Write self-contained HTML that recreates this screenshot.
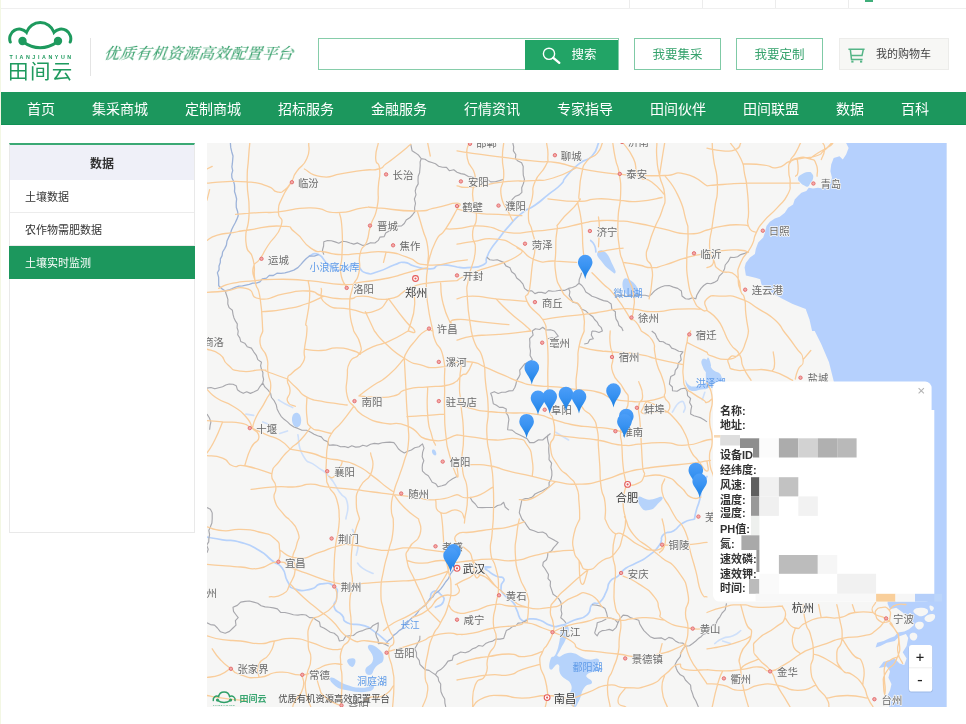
<!DOCTYPE html>
<html lang="zh-CN">
<head>
<meta charset="utf-8">
<title>田间云 - 土壤实时监测</title>
<style>
*{box-sizing:border-box;margin:0;padding:0}
html,body{width:966px;height:724px;overflow:hidden;background:#fff}
body{position:relative;font-family:"Liberation Sans","Noto Sans CJK SC",sans-serif;color:#333}
.abs{position:absolute}
#logo,#slogan,#nav,#side,.obtn,#cart,#sbtn,#search{filter:blur(0.3px)}
#lstrip{left:0;top:0;width:1px;height:724px;background:#f3f7e4}
#topline{left:1px;top:8px;width:965px;height:1px;background:#efefef}
.tv{top:0;width:1px;height:8px;background:#ececec}
#tgreen{left:865px;top:0;width:8px;height:2px;background:#3fae7a}
#logo{left:8px;top:19px;width:66px;height:64px}
#ldiv{left:90px;top:38px;width:1px;height:38px;background:#e4e4e4}
#slogan{left:104px;top:42px;width:200px;height:24px;line-height:24px;font-family:"Liberation Serif","Noto Serif CJK SC",serif;font-style:italic;font-weight:500;font-size:15.5px;letter-spacing:0.3px;color:#37a06c;white-space:nowrap;transform:skewX(-8deg);transform-origin:0 50%}
#search{left:318px;top:38px;width:301px;height:32px;border:1.5px solid #86cdaa;background:#fff}
#sbtn{left:525px;top:39.5px;width:92.5px;height:30px;background:#22a466;color:#fff;font-size:12.5px;line-height:30px}
#sbtn span{position:absolute;left:46.5px;top:0.5px}
#sbtn svg{position:absolute;left:16px;top:5px}
.obtn{top:38px;height:32px;border:1.5px solid #7fcaa6;background:#fff;color:#35a26c;font-size:12.5px;line-height:32px;text-align:center;padding-left:0}
#cart{left:839px;top:38px;width:110px;height:32px;border:1px solid #ececea;background:#f7f7f5;color:#444;font-size:11px;line-height:30px}
#cart span{position:absolute;left:36px;top:0;white-space:nowrap}
#cart svg{position:absolute;left:8px;top:9px}
#nav{left:1px;top:92px;width:965px;height:33px;background:#1c975d;border-bottom:1px solid #109155;color:#fff;font-size:14px;line-height:34px;white-space:nowrap}
#nav a{position:absolute;top:0;height:33px;text-align:center;color:#fff;text-decoration:none}
#side{left:9px;top:143px;width:186px;height:390px;border:1px solid #e9e9e9;border-top:2.5px solid #3aa974;background:#fff}
#side .hd{height:35px;line-height:38px;background:#eff0f8;text-align:center;font-size:12px;font-weight:700;color:#333}
#side .it{height:33px;line-height:34.5px;padding-left:15px;font-size:11px;color:#333;border-bottom:1px solid #ececec;white-space:nowrap}
#side .it.on{background:#1c975d;color:#fff;border-bottom:none;margin:0 -1px;padding-left:16px}
#map{left:207px;top:143px;width:740px;height:564px;overflow:hidden;background:#f6f6f5}
#map svg{position:absolute;left:0;top:0;filter:blur(0.4px)}
</style>
</head>
<body>
<div id="lstrip" class="abs"></div>
<div id="topline" class="abs"></div>
<div class="abs tv" style="left:629px"></div><div class="abs tv" style="left:702px"></div><div class="abs tv" style="left:775px"></div><div class="abs tv" style="left:848px"></div>
<div id="tgreen" class="abs"></div>

<svg id="logo" class="abs" viewBox="8 19 66 64">
<g fill="none" stroke="#1e9a5e" stroke-width="3" stroke-linecap="round">
<path d="M10.3 42 A9.6 9.6 0 0 1 26.5 32.3 A14.6 14.6 0 0 1 54 32.3 A9.6 9.6 0 0 1 70.2 42"/>
<path d="M22.5 41.5 Q40 54 58 41.5"/>
</g>
<circle cx="22.5" cy="41" r="4.2" fill="#1e9a5e"/><circle cx="58" cy="41" r="4.2" fill="#1e9a5e"/>
<text x="41.7" y="58.7" text-anchor="middle" font-family="Liberation Sans,sans-serif" font-weight="700" font-size="5.3" letter-spacing="2.6" fill="#1e9a5e">TIANJIANYUN</text>
<text x="40.9" y="79.3" text-anchor="middle" font-family="Liberation Sans,Noto Sans CJK SC,sans-serif" font-weight="400" font-size="20.5" letter-spacing="1.4" fill="#1e9a5e">田间云</text>
</svg>
<div id="ldiv" class="abs"></div>
<div id="slogan" class="abs">优质有机资源高效配置平台</div>

<div id="search" class="abs"></div>
<div id="sbtn" class="abs"><svg width="24" height="22" viewBox="0 0 24 22"><circle cx="8" cy="8.8" r="5.6" fill="none" stroke="#fff" stroke-width="1.4"/><path d="M12.3 12.8 L18.3 17.8" stroke="#fff" stroke-width="2.4" stroke-linecap="round"/></svg><span>搜索</span></div>
<div class="abs obtn" style="left:634px;width:87px">我要集采</div>
<div class="abs obtn" style="left:736px;width:87px">我要定制</div>
<div id="cart" class="abs"><svg width="18" height="16" viewBox="0 0 18 16"><path d="M0.4 1.2 H16.6 M2.3 1.2 L3.5 11.4 H14.6 M15.4 1.2 L14 7.6 H3.2" fill="none" stroke="#55b587" stroke-width="1.5"/><rect x="3.3" y="12.6" width="2.2" height="2" fill="#55b587"/><rect x="12" y="12.6" width="2.2" height="2" fill="#55b587"/></svg><span>我的购物车</span></div>

<div id="nav" class="abs">
<a style="left:7.5px;width:65px">首页</a>
<a style="left:72.5px;width:93px">集采商城</a>
<a style="left:165.5px;width:93px">定制商城</a>
<a style="left:258.5px;width:93px">招标服务</a>
<a style="left:351.5px;width:93px">金融服务</a>
<a style="left:444.5px;width:93px">行情资讯</a>
<a style="left:537.5px;width:93px">专家指导</a>
<a style="left:630.5px;width:93px">田间伙伴</a>
<a style="left:723.5px;width:93px">田间联盟</a>
<a style="left:816.5px;width:65px">数据</a>
<a style="left:881.5px;width:65px">百科</a>
</div>

<div id="side" class="abs">
<div class="hd">数据</div>
<div class="it">土壤数据</div>
<div class="it">农作物需肥数据</div>
<div class="it on">土壤实时监测</div>
</div>

<div id="map" class="abs">
<svg width="740" height="564" viewBox="207 143 740 564">
<!--MAP-->
<path d="M846.1 143L848.6 148L846.1 154.6L842.8 159.6L839.5 156.3L833.7 157.9L831.2 164.6L830.4 171.2L832 177.8L829.6 184.5L822.9 188.6L817.9 187.8L813 188.6L808.8 187.8L806.3 191.1L801.4 192.8L798 196.1L794.7 199.4L793.1 204.4L788.1 207.7L784.8 212.7L779.8 216.8L774.8 218.5L769.9 221.8L766.5 225.9L764.9 232.6L763.2 237.5L758.2 242.5L755.8 249.1L754.9 254.1L750 257.4L745.8 263.1L744.6 267.6L745.9 275.4L756.3 278L760.2 279.3L761.5 284.5L773.2 293.6L782.3 298.8L792.7 304L805.7 309.1L809.5 319.5L812.1 331L814.7 331L821.2 344L829 362.2L834.2 382.9L842 434.8L842 519L887.6 595L887.6 603.7L890 609.3L896.3 607.7L902.7 612.5L909 618.8L913.8 625.2L909 629.2L904.3 631.6L897.9 632.4L894.7 636.3L890 637.9L883.6 641.1L877.2 642.7L875.6 647.5L880.4 645.9L886.8 642.7L894.7 641.1L899.5 636.3L905.9 634L908.2 637.9L906.6 645.9L902.7 652.2L906.6 658.6L904.3 665L899.5 663.4L894.7 658.6L890 660.2L883.6 661.8L878.8 668.1L886.8 666.5L890 671.3L888.4 677.7L891.5 684L890 690.4L886.8 696.7L890 703.1L888.4 710.1L946.6 708L946.6 142Z" fill="#b5d0fd"/>
<path d="M913.8 610.1C915.1 608.2 917.9 607.5 921.7 607.7C925.6 607.9 927.7 608.8 928.1 610.9C928.5 613 926.3 614.6 923.3 615.7C920.4 616.7 919.5 616.4 917 614.9C914.4 613.4 912.5 612 913.8 610.1Z M924.9 617.3C926.2 615.1 930.3 613.7 932.9 614.1C935.4 614.5 935.7 616.7 934.5 618.8C933.2 621 930.7 622.5 928.1 622C925.6 621.6 923.7 619.4 924.9 617.3Z M915.4 623.6C916.4 621.7 919.6 621.2 921.7 622C923.9 622.9 924.4 624.9 923.3 626.8C922.3 628.7 919.9 630 917.8 629.2C915.7 628.3 914.3 625.5 915.4 623.6Z M929.7 605.8C930.4 605 933.4 606.4 933.8 607.7C934.3 609.1 932.4 611.4 931.3 610.9C930.2 610.4 929 606.7 929.7 605.8Z M909.8 634.7C910.7 632.8 913.5 632.3 915.4 633.2C917.3 634 917.8 636 917 637.9C916.1 639.8 914.1 641.2 912.2 640.3C910.3 639.5 909 636.7 909.8 634.7Z" fill="#f6f6f5"/>
<path d="M597.2 253.3C597.9 250.6 600.8 248.9 605 252C609.1 255.1 610 259.5 612.8 265C615.5 270.6 616.1 271.4 615.4 272.8C614.7 274.2 613.6 273 610.2 270.2C606.7 267.4 605.8 266.9 602.4 262.4C598.9 257.9 596.5 256.1 597.2 253.3Z M623.1 280.6C624.5 277.1 626.8 277.8 630.9 280.6C635.1 283.4 637.3 286.8 638.7 291C640.1 295.1 639.6 295.5 636.1 296.2C632.7 296.9 629.2 297.7 625.7 293.6C622.3 289.4 621.8 284.1 623.1 280.6Z M292.7 415.4C294.1 412.3 297.1 411.7 299.2 414.1C301.2 416.5 301.8 421.3 300.5 424.5C299.1 427.6 296 428.2 294 425.8C291.9 423.3 291.3 418.5 292.7 415.4Z M432.3 449.9C433 449.1 434.5 449.6 435.5 450.9C436.4 452.3 436.7 454.3 436 455.1C435.3 455.9 433.8 455.4 432.9 454.1C431.9 452.7 431.6 450.7 432.3 449.9Z M638.7 497.1C640.8 495.1 642.9 499.7 649.1 499.7C655.3 499.7 660 495.8 662.1 497.1C664.2 498.5 660.4 501.5 656.9 504.9C653.4 508.4 653.3 509.4 649.1 510.1C645 510.8 644.1 511 641.3 507.5C638.6 504.1 636.6 499.2 638.7 497.1Z M707 359.6C708 354 710.2 361.3 710.9 364.7C711.6 368.2 708.6 369.1 709.6 372.5C710.6 376 711.3 375.7 714.8 377.7C718.2 379.8 722.6 378.9 722.6 380.3C722.6 381.7 718.9 381.5 714.8 382.9C710.6 384.3 709.1 391.7 707 385.5C704.9 379.3 706 365.1 707 359.6Z M368 646.2C369.3 643.4 374.2 645.3 378.3 648.8C382.5 652.3 384.2 654.3 383.5 659.2C382.8 664 379.2 662.8 375.7 667C372.3 671.1 373.3 674.1 370.6 674.8C367.8 675.5 364.7 673.7 365.4 669.6C366.1 665.4 372.5 665.4 373.1 659.2C373.8 653 366.6 649 368 646.2Z M347.2 660.5C347.9 658.4 353.6 657.5 355 659.2C356.4 660.9 354.5 666.6 352.4 667C350.3 667.3 346.5 662.6 347.2 660.5Z M331.6 677.4C335.1 677.4 338.9 682.4 347.2 685.1C355.5 687.9 355.8 687.7 362.8 687.7C369.7 687.7 371.8 684.1 373.1 685.1C374.5 686.2 374.9 690.3 368 691.6C361 693 356.2 692.1 347.2 690.3C338.2 688.6 338.4 688.6 334.2 685.1C330.1 681.7 328.1 677.4 331.6 677.4Z M563.4 625.4C565.5 624.7 567.9 624.6 568.6 628C569.3 631.5 568.1 632.9 566 638.4C564 644 562.9 644 560.8 648.8C558.8 653.6 555.5 655.6 558.2 656.6C561 657.6 563.6 652 571.2 652.7C578.8 653.4 579.5 657.5 586.8 659.2C594.1 660.9 595.7 657.1 598.5 659.2C601.3 661.3 596.1 664.2 597.2 667C598.2 669.7 605.1 667.5 602.4 669.6C599.6 671.6 589.6 671.3 586.8 674.8C584 678.2 592.7 679.1 592 682.6C591.3 686 587.7 682.9 584.2 687.7C580.7 692.6 581.8 695.6 579 700.7C576.2 705.8 576.6 707.6 573.8 707C571.1 706.3 569.3 703.9 568.6 698.1C567.9 692.3 573.3 691.4 571.2 685.1C569.1 678.9 564.3 680.3 560.8 674.8C557.4 669.2 561 665.8 558.2 664.4C555.5 663 552.5 671 550.5 669.6C548.4 668.2 549.1 663.3 550.5 659.2C551.8 655 553.2 658.8 555.7 654C558.1 649.1 558.2 647.2 559.5 641C560.9 634.8 559.8 634.8 560.8 630.6C561.9 626.5 561.4 626.1 563.4 625.4Z M798 178.7C798.3 176.4 798.7 176.3 801.4 174.5C804 172.7 805.1 172.2 808 172C810.9 171.8 810.8 171.9 812.1 173.7C813.5 175.4 813.4 176.2 813 178.7C812.5 181.1 811.8 180.7 810.5 182.8C809.2 184.9 809.8 185.8 808 186.4C806.2 187.1 805.8 186.3 803.8 185.3C801.9 184.3 802.1 184.6 800.5 182.8C799 181 797.8 180.9 798 178.7Z M701.7 360.5C702.5 358.3 704 358.7 706 359.2C708 359.7 707.8 360.2 709.1 362.3C710.5 364.5 709.5 365 711 367.3C712.5 369.6 712.4 369.4 714.7 371C717 372.7 717.7 371.5 719.7 373.5C721.7 375.5 720.9 376.4 722.2 378.5C723.5 380.7 726.7 380.8 724.7 381.6C722.7 382.4 718 380.8 714.7 381.6C711.4 382.4 714.2 382.9 712.2 384.7C710.2 386.6 710.6 387.1 707.3 388.5C703.9 389.8 703.8 389 699.8 389.7C695.8 390.4 695.7 391.6 692.3 390.9C689 390.3 689.2 390.2 687.4 387.2C685.5 384.2 685.2 380.4 685.5 379.8C685.8 379.1 686.1 382.9 688.6 384.7C691.1 386.6 691.5 386.6 694.8 386.6C698.1 386.6 697.4 386.2 701 384.7C704.7 383.2 705.9 383 708.5 381C711.2 379 711.7 379.6 711 377.3C710.3 374.9 708.2 374.9 706 372.3C703.9 369.6 704.1 370.5 702.9 367.3C701.7 364.2 700.8 362.6 701.7 360.5Z" fill="#b6d3fb"/>
<path d="M297.9 434.8C299.6 441.8 297 445.2 303.1 455.6C309.1 466 307.4 459.1 316 466C324.7 472.9 321.2 467.7 329 476.4C336.8 485 333.3 483.3 339.4 492C345.5 500.6 345 493.3 347.2 502.3C349.4 511.3 346.3 513.4 345.9 519 M278.4 399.8C280.6 401.1 280.1 401.1 284.9 403.7C289.6 406.3 290.1 406.3 292.7 407.6 M245.9 414.1 L253.7 415.4 M262.8 421.9 L269.3 424.5 M279.7 433.5 L287.5 430.9 M555.7 432.2 L568.6 440 M357.6 563.1C359.3 564.9 357.6 564.9 362.8 568.3C368 571.8 369.7 571.8 373.1 573.5 M352.4 529.4C354.1 533.7 356.3 533.7 357.6 542.4C358.9 551 356.7 551 356.3 555.3 M714.8 643.6C717.4 641.9 716.5 641 722.6 638.4C728.6 635.8 726.9 638.4 733 635.8C739 633.2 738.2 632.4 740.7 630.6 M722.6 641 L730.4 643.6 M672.4 412.1C674.9 408.8 675.8 404.2 679.9 402.1C684 400.1 683.6 402.6 684.9 405.9C686.1 409.2 684 410 683.6 412.1 M702.3 399.7 L704.8 392.2" fill="none" stroke="#cfe0fa" stroke-width="1.6" stroke-linecap="round"/>
<path d="M309.5 255.9C312.6 255.5 312.1 251.6 318.6 254.6C325.1 257.7 321.2 259.8 329 265C336.8 270.2 333.3 270.2 342 270.2C350.6 270.2 347.2 264.1 355 265C362.8 265.9 357.6 270.6 365.4 272.8C373.1 275 368.8 274.1 378.3 271.5C387.9 268.9 385.3 268 393.9 265C402.6 262 397.4 262 404.3 262.4C411.2 262.9 406 264.1 414.7 266.3C423.3 268.5 421.6 269.3 430.3 268.9C438.9 268.5 431.7 265.7 440.6 265C449.6 264.4 451.5 266.3 457 267 M598.5 143C596.3 147.3 598.5 149.1 592 156C585.5 162.9 587.7 156.8 579 163.8C570.4 170.7 572.1 169.8 566 176.7C560 183.7 566.9 178.5 560.8 184.5C554.8 190.6 556.5 188 547.9 194.9C539.2 201.8 543.5 199.2 534.9 205.3C526.2 211.4 530.6 206.2 521.9 213.1C513.2 220 516.7 217.4 508.9 226.1C501.1 234.7 504.6 231.3 498.5 239.1C492.5 246.8 494.6 243.4 490.7 249.4C486.9 255.5 489.5 252 486.9 257.2C484.3 262.4 489.5 261.6 483 265C476.5 268.5 476 267 467.4 267.6C458.7 268.3 460.5 267.2 457 267 M590.7 240.4C592 242.1 592.9 241.7 594.6 245.5C596.3 249.4 595.5 249.9 595.9 252 M707 476.4C705.4 479.8 704.8 479 702.3 486.8C699.9 494.6 701.7 492 699.7 499.7C697.7 507.5 698.1 503.7 696.4 510.1C694.6 516.5 695.1 516 694.5 519 M207 537.2C212.2 538 211.3 538 222.6 539.8C233.8 541.5 228.6 538.9 240.7 542.4C252.9 545.8 248.5 544.1 258.9 550.2C269.3 556.2 264.1 554.5 271.9 560.5C279.7 566.6 277.1 561.4 282.3 568.3C287.5 575.2 283.2 574.4 287.5 581.3C291.8 588.2 287.5 586.5 295.3 589.1C303.1 591.7 302.2 590.8 310.8 589.1C319.5 587.4 313.4 584.8 321.2 583.9C329 583 329 582.2 334.2 586.5C339.4 590.8 336.8 590 336.8 596.9C336.8 603.8 332.5 601.2 334.2 607.3C335.9 613.3 337.7 609.9 342 615.1C346.3 620.2 340.3 619.4 347.2 622.8C354.1 626.3 354.1 622.8 362.8 625.4C371.4 628 365.4 625.4 373.1 630.6C380.9 635.8 381.8 637.6 386.1 641 M430.3 599.5C431.1 596.9 429.4 593.4 432.9 591.7C436.3 590 437.2 590.8 440.6 594.3C444.1 597.7 445 597.7 443.2 602.1C441.5 606.4 438 605.5 435.5 607.3 M694.5 519C690.6 520.3 689.8 519 682.9 522.9C675.9 526.8 680.3 526.8 673.8 530.7C667.3 534.6 668.1 529.8 663.4 534.6C658.6 539.3 664.3 538 659.5 545C654.7 551.9 656.9 549.3 649.1 555.3C641.3 561.4 643.9 558.8 636.1 563.1C628.3 567.5 631.8 564 625.7 568.3C619.7 572.7 623.1 571.8 618 576.1C612.8 580.4 614.1 576.1 610.2 581.3C606.3 586.5 609.7 584.8 606.3 591.7C602.8 598.6 604.5 597.7 599.8 602.1C595 606.4 596.3 600.3 592 604.7C587.7 609 592.9 609.9 586.8 615.1C580.7 620.2 582.5 616.8 573.8 620.2C565.2 623.7 568.6 623.7 560.8 625.4C553.1 627.2 557.4 627.2 550.5 625.4C543.5 623.7 547 622.4 540.1 620.2C533.2 618.1 535.7 618.9 529.7 618.9C523.6 618.9 526.2 623.3 521.9 620.2C517.6 617.2 519.7 615.9 516.7 609.9C513.7 603.8 517.1 607.3 512.8 602.1C508.5 596.9 507.6 599.5 503.7 594.3C499.8 589.1 501.1 591.7 501.1 586.5C501.1 581.3 505.5 582.2 503.7 578.7C502 575.2 501.1 578.7 495.9 576.1C490.7 573.5 491.6 573.5 488.2 570.9C484.7 568.3 484.7 569.6 485.6 568.3C486.4 567 491.6 567.5 490.7 567C489.9 566.6 485.6 567 483 567" fill="none" stroke="#b7d2fb" stroke-width="1.7" stroke-linecap="round" stroke-linejoin="round"/>
<path d="M225.2 291L226.6 295.2L227.9 299.4L227.8 304L229.1 307.6L232.4 310.3L233 314.3L233.9 317.7L235.4 320.9L237.3 323.9L237.1 327.7L238.2 331 M323.8 254.6L322.4 250.3L323.6 246L323.8 241.7L327.6 240.5L331.4 240.7L335.1 241.9L338.8 243.2L342.6 241.2L346.4 241.7L350.1 243L353.8 244.1L357.6 242.9L362.8 245.5L366.7 244.5L370.5 242.7L374.9 243L378.3 240.4L380 237.1L384.2 236.6L385.7 233.1L388.7 231.3L391.4 228.8L394.4 227.1L397.8 226.1L401.6 225.9L404.3 223.5L406.2 219.9L409.7 217.8L412.4 215L414.7 211.8L414.6 207.5L415.5 203.4L414.4 199L416 194.9L415.2 191L416.2 187.4L418.2 183.9L418 180.1L418.2 176.3L419.6 172.7L419.9 169L420.2 165.5L420.1 162L421.2 158.6L418.7 155.3L415.5 152.9L412.1 150.8L410.8 144.3 M421.2 158.6L425 159.2L428.2 161.4L431.9 162.5L435.5 163.8L438.6 166.2L442.4 167.2L446.5 167.4L449.3 170.7L453.8 169.7L457 172.2 M512.8 143L513.7 146.9L513.4 150.9L515.8 154.5L515.4 158.6L518 161.1L521.6 162.8L523.2 166.4L523.1 170.7L523.3 175.1L524.5 179.3L523.4 183.6L521.7 187.8L521.9 192.3L519.2 194.9L515.5 196.2L512.8 198.8L510.6 201.9L508.9 205.3 M457 172.2L460.8 173.6L464.8 174.4L468.4 176.6L472.6 176.7L475.8 179.1L479.9 178.8L483.3 180.3L487.5 179.6L490.7 181.9L495.2 181.7L499.5 180.6L503.7 179.3 M486.9 257.2L489.8 259.7L493.3 260.2L497.2 259.7L500.5 261.1L503.7 262.4L505.9 265.9L510 267.7L511.6 271.7L514.9 274.2L516.7 278L520.2 280.8L523 284.1L524.5 288.4L527.6 290.8L531.9 290.8L534.9 293.6L538.2 292.4L541.8 292.4L545.4 293.4L548.6 290.6L552.2 291.3L555.7 291L560 290.3L564.5 290.4L568.6 288.4L572.5 287.5L576 285.9L579 283.2L579.2 279.6L580.5 276.2L581.6 272.8 M568.6 288.4L569.9 291.7L569.2 295.6L571.2 298.8L572.9 302.3L577.2 303.2L579.7 305.9L581.6 309.1L586 311.1L589.4 314.3L592.6 316.4L594.6 319.5L597.2 322.1L598.7 325.2L601.3 327.7L602.4 331L598.9 332.5L595.5 331.2L592 331 M579 283.2L581.9 285.5L584.1 288.5L585.8 291.9L589 294L592 296.2L595.9 297.5L599.7 299.1L603.5 300.6L607.6 301.4L611.2 304L611.8 309L615.4 311.7L615.4 315.4L616 318.9L618 322.1L618.9 325.5L621.7 327.8L623.1 331 M615.4 296.2L619 295.9L622.6 295L626.3 296.6L629.9 294.9L633.5 296.2L637.4 294.9L641.3 295.3L645.2 295.2L649.1 296.2L652 293.7L654.6 290.9L657.6 288.7L661 287L664.7 285.8L669.2 285.5L673.4 287.1L677.7 288.4L681.4 291L682 296L685.5 298.8L688.9 299.1L692.4 297.7L695.8 298.8L696.9 295L698.9 291.6L701 288.4L703.7 285.5L707 283.2 M532.3 331L535.4 328.7L539.6 329.5L542.7 327.3L546.1 330L550.5 329.7L554.4 331 M748.5 252L744.7 253.4L740.7 254.6L737.6 256.7L734.1 257.5L730.4 257.2L728.2 261.4L725.2 265L724.5 269.1L722.6 272.8L719.2 276.1L717.4 280.6L714.2 282.4L710.8 283.7L707 283.2 M238.2 331L237.7 334.8L239.8 337.9L240.7 341.4L244.7 343.2L247.2 346.7L251.4 348.1L253.7 351.8L256.3 355.3L257.8 359.6L261.5 362.2L260.6 365.7L261.4 369.1L262.9 372.5L262.8 376L263.6 379.4L262.8 382.9L264.8 386.9L267.9 389.9L270.6 393.3L271.5 397.5L274.3 400.9L276.2 404.7L277.1 408.9L279 412.7L281.1 416.3L284.1 419.3L287.5 421.9L290.5 424.8L293.9 427L297.9 428.4L302 430.3L306.8 430.2L310.8 432.2L314.1 434.2L317.6 435.8L321.3 436.9L323.8 440L327.4 441.6L329 445.2L333 444.9L336.9 445.2L340.6 446.8L344.6 446.5L348.3 447.6L351.8 445.8L355.6 447.1L359.2 446.9L362.8 445.2L366.8 446.3L370.5 444.2L374.4 443.4L378.3 443.9L382.2 442.8L386.1 442.4L389.9 442.1L393.9 442.6L396.2 445.5L398.3 448.7L401 451.1L404.3 453L407.7 451.2L411.4 450L414.7 447.8L419 446.7L422.5 443.9L424 448.1L422.6 452.4L422.2 456.7L423.8 460.8L422.5 464.2L422.2 467.6L422.5 471.2L425.1 473.7L428.3 475.7L430.3 479L432.2 482.2L435.8 483.8L438 486.8L441.9 485.8L445.6 484.6L448.4 481.6L452.6 478.7L457 476.4 M207 388.1L210.9 387.5L214.9 388.8L218.7 387.8L222.6 386.8L225.8 385L229.2 384L233 384.2L236.2 385.7L237.4 389.7L240.1 391.7L243.3 393.3L246.7 391.8L250.4 393.4L253.7 392L257.8 390L260.1 386.3L262.8 382.9 M207 414.1L209.3 417.8L210.9 421.9L210.1 425.7L209.6 429.7 M207 507.5L210.4 509.3L212.2 512.7 M532.3 331L533.1 335.1L529.6 338.6L529.9 342.6L529.7 346.6L530.5 350.9L530.1 355.5L532.3 359.6L528.9 362.3L524.7 363.9L521.9 367.3L519.7 370.2L520.1 374.2L518.7 377.4L516.7 380.3L516 384L514.8 387.5L512.8 390.7L509.1 390.9L505.5 392.3L501.8 392.2L498.2 393.5L494.3 391.7L490.7 393.3L492 396.7L492.6 400.2L493.3 403.7L496.5 405.2L499.4 407.4L503.2 407.4L506.3 408.9L506 412.6L508.1 415.8L508.9 419.3L508.4 422.7L508 426.2L507.6 429.7L512.1 430.1L515.5 432.9L519.3 434.8L523.3 436.7L527.1 438.8L529.7 442.6L534.2 442.6L538.2 439.9L542.7 440L546.5 436.7L550.5 433.5 M547.9 434.8L547.4 438.3L548.1 441.8L549 445.2L548.7 448.7L548.8 452.2L549.2 455.6L549 459.6L551.6 463.2L550.9 467.3L551.8 471.2L551.9 475.2L551.1 479.1L549 482.7L549.2 486.8L545.8 488.8L542.3 490.8L538.6 492.3L535 494L532.3 497.1L528.9 498.2L525.3 498.6L521.9 499.7L521 504.1L520.1 508.4L519.3 512.7L521.9 519 M470 497.1L472.1 501L475.3 504L477.8 507.5L482.1 507.6L486.4 507.5L490.7 507.5L494.5 507.5L497.5 505.5L500.9 504.7L503.7 502.3L505.2 507L508.9 510.1 M554.4 331L558.2 336.2L555 337.8L551.3 337.7L547.9 338.8 M592 331L592 331L591.3 335.1L593.3 338.8L589.8 339.6L587.8 343.2L584.2 344 M651.7 331L655.2 333.8L657 337.8L659.5 341.4L663.2 341.8L666.1 343.8L669.4 344.9L671.7 348.1L675.1 349.2L678.7 351.3L682.9 351.8L680.4 355.3L681.2 359.9L678.3 363.2L677.7 367.3L675.3 370.3L674.7 374.4L670.8 376.5L669.9 380.3L669.4 384.1L672.4 387L672.5 390.7L677.1 391.2L681.1 388.7L685.5 388.1L687.2 391.6L687.6 395.7L690.6 398.5L689.6 402.4L691.7 406.3L690.9 410.2L690.6 414.1L693.9 415.7L697.4 416.8L700.9 417.9L704 419.8L707 421.9 M207 552.7L208.2 549.2L206.6 545.3L208.7 541.9L208.9 538.2L209.6 534.6L208.8 530.4L210.4 526.7L211.9 523L212.2 519L212.2 512.7 M207 622.8L210.4 624.6L214.5 625.1L217.4 628L220.5 631.8L225.2 633.2L229.5 631.4L233 628L236 625.2L235.4 620.6L238.2 617.7L235.8 614.5L233.5 611.3L233 607.3L237.3 605.4L240.7 602.1L245.1 601.4L249.4 601L253.7 602.1L257.7 603.2L261.1 605.8L265.1 606.9L269.3 607.3L273.4 607.9L277.4 608.9L280.6 612.4L284.9 612.5L289.2 613.5L293.4 614.8L297.9 615.1L302 614.5L305.9 615L309.5 617.6L313.4 617.7L316.2 620.1L319.5 621.9L320.3 626.4L323.8 628L327.1 630.1L330.3 632.3L334.2 633.2L337.8 636.4L339.4 641L343.3 640.2L345.7 636.4L349.8 635.8L353.4 635.5L356.2 633.1L359.3 631.5L362.8 630.6L366.3 629L370.3 628.3L373.1 625.4L378.3 622.8L378.1 626.5L377.7 630L375.7 633.2L376.5 636.7L378.2 640L378.3 643.6L382.1 643.3L385.5 644.4L388.7 646.2 M419.9 635.8L419.8 639.6L418.1 642.6L416.5 645.8L414.7 648.8L416.5 652.5L416.5 656.8L419.2 660.3L419.9 664.4L422.5 667L425.1 669.6L429 670.4L432.2 672.6L435.5 674.8L438.1 677.5L438.7 681L440.7 684L440.6 687.7L441 691.8L442.6 695.5L444.7 699L444.9 703.1L445.8 707 M457 654L453.3 655.6L452.2 660.1L448 661.1L445.8 664.4L443.4 667.1L440.7 669.6L437.3 671.5L435.5 674.8 M521.9 519L524.8 522.3L527.1 525.9L529.7 529.4L533.9 530.8L538.1 532.5L542.7 532L546 533.7L548.3 537L551.7 538.7L554.9 540.6L558.2 542.4L555.9 545.2L553.4 547.9L551.4 551.1L547.9 552.7L547.6 556.4L546.5 559.7L543.3 562.2L542.7 565.7L544.9 568.5L546.7 571.5L548.5 574.5L548 578.6L550.5 581.3L550.2 585.9L551.7 590.1L553.1 594.3L556.1 596.4L558.8 598.9L560.8 602.1L561.5 606L561 609.9L561.9 613.8L560.8 617.7L563.6 620.1L566 622.8 M457 654L460.7 652L465.2 652.7L469.1 651.4L472.6 648.8L475.9 647.6L478.8 645.5L482.8 646.2L485.6 643.6L489 642L492.7 641.1L496 639.1L500 639.1L503.7 638.4L505 634.5L506.3 630.6L509.4 629.1L512.2 626.7L515.7 626L518.1 623.1L521.9 622.8L527.1 620.2 M592 604.7L596.5 605.3L601 606.1L605 608.6L606.6 613L607.6 617.7L611.6 618.2L615.1 619.8L618 622.8L620.1 618.6L623.1 615.1L627.3 615.6L630.9 617.9L634.8 619L638.7 620.2L639.8 624L641.8 627.4L643.9 630.6L647 633.7L650.2 636.7L654.3 638.4L657.9 638.1L661.6 637.9L665.2 639.9L668.8 637.4L672.5 638.4L675.4 640.9L678.7 642.7L682.9 643.1L685.5 646.2L682.8 649.2L680.9 652.6L680.3 656.6L677.3 660.3L675.1 664.4L676.2 668.2L677.7 671.7L680.3 674.8L683.6 676.6L685.4 680L688 682.6L690.6 685.1L691 689.4L692.4 693.2L693.6 697.1L695.8 700.7L698.4 707 M712.2 625.4L709.4 629.2L707 633.2L703.5 634.2L701.1 636.7L698.3 638.6L695.8 641L692.7 643.5L689.5 645.7L685.5 646.2 M594.6 633.2L597.2 635.8L599 632.4L602.4 630.6L605.8 630.2L609.3 629.4L612.8 630.6L616.2 627.3L618 622.8 M594.6 633.2L595.6 629.8L596.7 626.4L597.2 622.8L601.9 621.2L606.3 618.9 M726.5 603.4L725.2 609.9L722.1 613L720 616.8L717.4 620.2L715.8 623.9L712.2 625.4" fill="none" stroke="#a8a8ad" stroke-width="1.15" stroke-linejoin="round"/>
<path d="M230.4 143L230.7 147.4L231.7 151.7L233 156L232.7 159.6L232.4 163.2L231.9 166.9L232.7 170.6L231.7 174.2L231.9 177.7L233.4 181L234.4 184.4L234.7 187.9L234.5 191.5L235.6 194.9L236.6 199L236.2 203.3L236.3 207.5L237.6 211.5L238.2 215.7L236.8 219.4L235.1 223L233.2 226.5L231.5 230L230.4 233.9L228.6 237.4L227 241L226.4 245.1L224.7 248.6L222.6 252L222.1 255.6L220.4 258.9L220.3 262.5L219 265.9L219.1 269.6L217.4 272.8L218.6 277.1L218.7 281.4L218.7 285.8L221.7 288.6L225.2 291L228.8 290L232.2 288.7L235.6 287.1L238.9 286.1L242.5 285.8L245.9 285.1L249.4 284.4L252.7 283.2L256.3 283.2L259.9 281.8L262.5 278.8L266.5 278.1L269.3 275.4L273.3 275.5L277 273.2L281 273.4L284.9 272.8L289.4 271.6L293.8 270.1L297.9 267.6L300.7 264.6L303.4 261.5L306.3 258.5L309.5 255.9L314.2 256.1L318.6 254.6 M386.1 643.6L388.4 640.6L391.4 638.5L393.5 635.4L396.5 633.3L399.1 630.6L402.3 628.6L403.8 625L407.3 623.2L409.5 620.2L412.1 617.7L415.2 615.5L417.5 612.7L419.5 609.5L422.5 607.3L425.6 605.2L427.6 602.1L429.7 598.9L432.9 596.9L434.8 593.7L438 591.7L440.6 589.1L443.2 585.6L445.6 582L448.4 578.7L450.5 573.8L453.6 569.6" fill="none" stroke="#9db3d9" stroke-width="1.3" stroke-linejoin="round"/>
<path d="M249.8 143C249.4 148.2 249.4 145.6 248.5 158.6C247.7 171.6 247.1 163.8 247.2 181.9C247.4 200.1 249.5 193.2 249.1 213.1C248.6 233 244.6 226.1 245.9 241.7C247.3 257.2 250.2 246.8 253.2 259.8C256.2 272.8 252.7 267.6 255 280.6C257.4 293.6 257.6 282 260.2 298.8C262.8 315.6 261.9 320.3 262.8 331 M308.8 143C308.2 148.2 311 149.1 306.9 158.6C302.9 168.1 301.8 163.8 296.6 171.6C291.4 179.3 296.1 173.3 291.4 181.9C286.6 190.6 286.6 187.6 282.3 197.5C278 207.5 278.8 202.3 278.4 211.8C278 221.3 284.4 214.8 281 226.1C277.5 237.3 274.9 234.7 268 245.5C261.1 256.4 265.2 251.2 260.2 258.5C255.3 265.9 254.9 260.3 253.2 267.6C251.5 275 254.4 276.3 255 280.6 M207 183.2C212.2 182.8 209.2 182.4 222.6 181.9C236 181.5 232.5 180.6 247.2 181.9C261.9 183.2 256.8 182.5 266.7 185.8C276.7 189.1 271 190.5 277.1 191.8C283.2 193.1 280.1 193 284.9 189.7C289.6 186.4 289.2 184.5 291.4 181.9 M304.4 169C310 171.6 308.7 175.2 321.2 176.7C333.8 178.3 328.1 175.8 342 173.6C355.8 171.5 350.6 171.8 362.8 170.3C374.9 168.7 370.6 171.1 378.3 169C386.1 166.8 380.1 168.1 386.1 163.8C392.2 159.4 388.3 162.5 396.5 156C404.7 149.5 406 148.2 410.8 144.3 M235.6 214.4C243.3 213.8 244.6 213.4 258.9 212.6C273.2 211.7 261.1 213.4 278.4 211.8C295.7 210.2 291.4 207.6 310.8 207.9C330.3 208.2 319.5 212.6 336.8 212.6C354.1 212.6 349.4 209.5 362.8 207.9C376.2 206.3 359.7 206.9 377 207.9C394.3 208.9 395.2 211 414.7 211C434.2 211 421.3 210.5 435.5 207.9C449.6 205.3 449.8 202.8 457 203.2C464.2 203.7 457 207.2 457 209.2 M207 240.4C210.5 238.6 208.7 237.8 217.4 235.2C226 232.6 222.6 234.3 233 232.6C243.3 230.8 232.5 232.1 248.5 230C264.5 227.8 265.4 225.2 281 226.1C296.6 226.9 285.3 225.2 295.3 232.6C305.2 239.9 300.9 241.7 310.8 248.1C320.8 254.6 314.7 249.9 325.1 252C335.5 254.2 330.3 254.2 342 254.6C353.7 255.1 345.5 254.2 360.2 253.3C374.9 252.5 370.6 250.7 386.1 252C401.7 253.3 393.1 252.9 406.9 257.2C420.7 261.6 411 263.7 427.7 265C444.4 266.3 447.2 262.4 457 261.1 M218.7 288.4C223.4 286.6 220.8 285.8 233 283.2C245.1 280.6 241.2 281.9 255 280.6C268.9 279.3 256.8 279.3 274.5 279.3C292.2 279.3 285.7 278.9 308.2 280.6C330.7 282.3 323.8 284.1 342 284.5C360.2 284.9 347.2 284.1 362.8 281.9C378.3 279.7 374 281 388.7 278C403.4 275 393.9 276.3 406.9 272.8C419.9 269.3 420.7 269.3 427.7 267.6 M378.3 143C377.5 148.2 375.3 149.9 375.7 158.6C376.2 167.2 378.8 159.4 379.6 169C380.5 178.5 379.2 174.2 378.3 187.1C377.5 200.1 379.6 195.1 377 207.9C374.4 220.7 374 214.3 370.6 225.6C367.1 236.8 370.1 232.4 366.7 241.7C363.2 250.9 362.8 242.9 360.2 253.3C357.6 263.7 361.5 261.1 358.9 272.8C356.3 284.5 355.4 276.3 352.4 288.4C349.4 300.5 349.4 294.9 349.8 309.1C350.2 323.4 352.4 323.7 353.7 331 M339.4 212.6C340.3 217.9 341.1 214.7 342 228.7C342.9 242.7 342.4 239.9 342 254.6C341.6 269.3 339 261.6 340.7 272.8C342.4 284.1 345 283.2 347.2 288.4 M207 292.3C213.1 291.8 212.2 292.3 225.2 291C238.2 289.7 234.3 285.8 245.9 288.4C257.6 291 247.2 297 260.2 298.8C273.2 300.5 268.9 296.2 284.9 293.6C300.9 291 295.3 290.1 308.2 291C321.2 291.8 310.8 293.6 323.8 296.2C336.8 298.8 334.2 298.8 347.2 298.8C360.2 298.8 348.9 296.2 362.8 296.2C376.6 296.2 373.1 301.4 388.7 298.8C404.3 296.2 396.5 293.6 409.5 288.4C422.5 283.2 411.8 285.8 427.7 283.2C443.5 280.6 447.2 281.5 457 280.6 M262.8 311.7C270.2 310.9 270.6 311.7 284.9 309.1C299.2 306.6 292.7 308.3 305.7 304C318.6 299.6 317.8 298.8 323.8 296.2 M308.2 280.6C308.7 286.6 310.4 284.1 309.5 298.8C308.7 313.5 306.9 316.1 305.7 324.7 M321.2 288.4C323 293.6 316.9 297 326.4 304C335.9 310.9 334.2 306.6 349.8 309.1C365.4 311.7 360.2 315.2 373.1 311.7C386.1 308.3 383.5 303.1 388.7 298.8 M386.1 252 L383.5 262.4 M427.7 143 L430.3 156 M417.3 211C419 216.9 419 216.7 422.5 228.7C425.9 240.6 425.9 234.7 427.7 246.8C429.4 259 428.1 252.9 427.7 265C427.2 277.1 426.4 270.2 426.4 283.2C426.4 296.2 425.5 288 427.7 304C429.8 319.9 431.1 322 432.9 331 M457 209.2C453.3 215.7 453 217.9 445.8 228.7C438.7 239.5 441.5 229.5 435.5 241.7C429.4 253.8 430.3 257.2 427.7 265 M388.7 298.8C393.9 305.7 395.6 308.8 404.3 319.5C413 330.3 413.4 327.1 414.7 331C416 334.8 410.4 331 408.2 331 M409.5 288.4C411.2 293.6 415.1 289.7 414.7 304C414.3 318.2 410.4 322 408.2 331 M440.6 283.2C441.5 290.1 439.8 290.1 443.2 304C446.7 317.8 448.4 317.8 451 324.7 M365.4 311.7 L374.4 331 M207 169 L212.2 166.4 M207 200.1 L209.6 189.7 M457 150.8C462.2 151.7 457 151.2 472.6 153.4C488.2 155.5 483 154.7 503.7 157.3C524.5 159.9 517.6 159.4 534.9 161.2C552.2 162.9 541.8 160.3 555.7 162.5C569.5 164.6 562.6 164.6 576.4 167.7C590.3 170.7 583.3 169.4 597.2 171.6C611 173.7 604.1 172.9 618 174.2C631.8 175.5 623.1 175 638.7 175.5C654.3 175.9 649.1 175.9 664.7 175.5C680.3 175 671.3 170.7 685.5 174.2C699.6 177.6 699.8 181.9 707 185.8 M468.7 143C468.2 148.2 465.2 147.3 467.4 158.6C469.5 169.8 473.4 164.6 475.2 176.7C476.9 188.9 472.1 181.9 472.6 194.9C473 207.9 476.5 202.7 476.5 215.7C476.5 228.7 473 221.7 472.6 233.9C472.1 246 476.5 237.3 475.2 252C473.9 266.7 471.3 262.4 468.7 278C466.1 293.6 466.5 281.1 467.4 298.8C468.2 316.4 470 320.3 471.3 331 M503.7 143C503.3 148.2 502.4 147.3 502.4 158.6C502.4 169.8 504.2 164.6 503.7 176.7C503.3 188.9 499.4 182.8 501.1 194.9C502.9 207 505 204.4 508.9 213.1C512.8 221.7 511.5 218.3 512.8 220.9 M457 185.8C462.2 186.3 457 188.4 472.6 187.1C488.2 185.8 483.8 184.1 503.7 181.9C523.6 179.8 515.8 181.9 532.3 180.6C548.7 179.3 538.3 182.4 553.1 178C567.8 173.7 568.6 171.1 576.4 167.7 M457 209.2C463.9 210.5 463.9 211.4 477.8 213.1C491.6 214.8 483.8 213.5 498.5 214.4C513.2 215.3 514.1 215.3 521.9 215.7 M546.6 143C547 147.3 548.3 148.2 547.9 156C547.4 163.8 549.6 157.7 545.3 166.4C540.9 175 539.2 171.6 534.9 181.9C530.6 192.3 534.4 186.3 532.3 197.5C530.1 208.8 528.4 204.4 528.4 215.7C528.4 226.9 530.1 220.9 532.3 231.3C534.4 241.7 534.9 235.6 534.9 246.8C534.9 258.1 534 251.2 532.3 265C530.6 278.9 531.4 276.3 529.7 288.4C528 300.5 522.8 291 527.1 301.4C531.4 311.7 536.4 309.7 542.7 319.5C548.9 329.4 544.8 327.2 545.9 331 M602.4 143C600.6 146.5 602.4 147.3 597.2 153.4C592 159.4 592 154.2 586.8 161.2C581.6 168.1 584.2 162.9 581.6 174.2C579 185.4 580.3 185.4 579 194.9C577.7 204.4 583.8 194.1 577.7 202.7C571.7 211.4 567.8 211.4 560.8 220.9C553.9 230.4 558.7 220.9 556.9 231.3C555.2 241.7 556.1 238.2 555.7 252C555.2 265.9 553.9 260.7 555.7 272.8C557.4 284.9 556.5 279.7 560.8 288.4C565.2 297 561.7 291.8 568.6 298.8C575.6 305.7 576.4 298.4 581.6 309.1C586.8 319.9 583.3 323.7 584.2 331 M547.9 198.8C557.8 199.7 561.3 201.4 577.7 201.4C594.2 201.4 583.8 199.2 597.2 198.8C610.6 198.4 604.1 199.2 618 200.1C631.8 201 624 202.3 638.7 201.4C653.4 200.5 654.3 198.8 662.1 197.5 M445.8 228.7C449.6 228.7 444.6 229.5 457 228.7C469.4 227.8 465.7 224.8 483 226.1C500.3 227.4 492.5 230.8 508.9 232.6C525.4 234.3 516.3 232.6 532.3 231.3C548.3 230 540.5 231.3 556.9 228.7C573.4 226.1 568.2 226.1 581.6 223.5C595 220.9 585.1 221.7 597.2 220.9C609.3 220 604.1 220 618 220.9C631.8 221.7 624 220.9 638.7 223.5C653.4 226.1 645.6 225.2 662.1 228.7C678.5 232.1 673.1 233.4 688 233.9C703 234.3 700.7 231.3 707 230 M612.8 143C613.6 148.2 613.2 148.2 615.4 158.6C617.5 169 617.5 162 619.3 174.2C621 186.3 621 179.3 620.6 194.9C620.1 210.5 618.4 203.6 618 220.9C617.5 238.2 617.5 233 619.3 246.8C621 260.7 620.1 252 623.1 262.4C626.2 272.8 624.9 267.6 628.3 278C631.8 288.4 631.8 283.2 633.5 293.6C635.3 304 634.4 300.5 633.5 309.1C632.7 317.8 631.8 316.1 630.9 319.5 M577.7 202.7C579 209.6 579.9 208.8 581.6 223.5C583.3 238.2 582 235.6 582.9 246.8C583.8 258.1 583.8 253.8 584.2 257.2 M598.5 217C598.7 220.9 599.3 218.7 599.3 228.7C599.3 238.6 598.7 240.8 598.5 246.8 M457 244.2C462.2 243.4 459.6 243.4 472.6 241.7C485.6 239.9 481.2 237.3 495.9 239.1C510.7 240.8 503.7 239.9 516.7 246.8C529.7 253.8 521.9 255.1 534.9 259.8C547.9 264.6 541.8 260.3 555.7 261.1C569.5 262 569.5 262 576.4 262.4 M516.7 246.8C516.3 250.3 530.1 248.6 515.4 257.2C500.7 265.9 492 265 472.6 272.8C453.1 280.6 462.2 278 457 280.6 M457 298.8C462.2 297.9 459.6 296.2 472.6 296.2C485.6 296.2 477.8 297 495.9 298.8C514.1 300.5 516.7 300.5 527.1 301.4 M656.9 143C656.9 148.2 656 147.8 656.9 158.6C657.8 169.4 656.9 163.3 659.5 175.5C662.1 187.6 663.8 183.2 664.7 194.9C665.5 206.6 665.5 199.2 662.1 210.5C658.6 221.7 658.6 217.4 654.3 228.7C650 239.9 651.7 234.7 649.1 244.2C646.5 253.8 645.6 249.4 646.5 257.2C647.4 265 650 259 651.7 267.6C653.4 276.3 652.6 272.8 651.7 283.2C650.8 293.6 650 293.6 649.1 298.8 M623.1 143C626.6 148.2 628.3 147.8 633.5 158.6C638.7 169.4 632.7 167.7 638.7 175.5C644.8 183.2 643.1 175.5 651.7 181.9C660.4 188.4 660.4 190.6 664.7 194.9 M664.7 175.5C669 181.9 670.7 180.6 677.7 194.9C684.6 209.2 682 205.3 685.5 218.3C688.9 231.3 687.6 220.9 688 233.9C688.5 246.8 686.8 241.7 686.8 257.2C686.8 272.8 685.9 266.7 688 280.6C690.2 294.4 688.9 289.2 693.2 298.8C697.6 308.3 696.4 305.3 701 309.1C705.6 313 705 310 707 310.4 M598.5 252C603.2 251.2 604.5 250.7 612.8 249.4C621 248.1 619.7 248.6 623.1 248.1 M592 272.8C595.5 276.3 594.6 275.4 602.4 283.2C610.2 291 605.8 284.1 615.4 296.2C624.9 308.3 625.7 311.7 630.9 319.5 M623.1 262.4C628.3 263.3 629.2 263.3 638.7 265C648.2 266.7 643.1 267.6 651.7 267.6C660.4 267.6 652.6 268.5 664.7 265C676.8 261.6 673.9 261.1 688 257.2C702.2 253.3 700.7 254.6 707 253.3 M457 261.1 L467.4 259.8 M542.7 319.5C548.7 318.7 547 318.7 560.8 316.9C574.7 315.2 570.4 316.1 584.2 314.3C598.1 312.6 591.1 313.5 602.4 311.7C613.6 310 607.6 310 618 309.1C628.3 308.3 621.4 308.3 633.5 309.1C645.6 310 639.6 311.7 654.3 311.7C669 311.7 662.1 310 677.7 309.1C693.2 308.3 693.2 309.1 701 309.1 M495.9 298.8C500.3 303.1 499.4 303.1 508.9 311.7C518.4 320.4 517.1 318.3 524.5 324.7C531.9 331.1 528.8 328.9 531 331 M641.3 331C639.6 328 639.6 326 636.1 322.1C632.7 318.3 632.7 320.4 630.9 319.5 M664.7 143C663.8 148.2 663.8 147.8 662.1 158.6C660.4 169.4 660.4 169.8 659.5 175.5 M451 324.7C453 323 446.4 320.4 457 319.5C467.6 318.7 465.7 320.4 483 322.1C500.3 323.9 500.3 323.9 508.9 324.7 M707 148.2C712.2 149.1 713.1 150.4 722.6 150.8C732.1 151.2 729.5 152.1 735.6 149.5C741.6 146.9 739 145.2 740.7 143 M730.4 143C733.8 148.2 736 148.2 740.7 158.6C745.5 169 742.5 163.8 744.6 174.2C746.8 184.5 745.9 177.6 747.2 189.7C748.5 201.8 748.1 198.4 748.5 210.5C749 222.6 745.9 218.7 748.5 226.1C751.1 233.4 753.7 230.4 756.3 232.6 M707 185.8C712.2 185.4 709.6 185.4 722.6 184.5C735.6 183.7 729.5 183.7 745.9 183.2C762.4 182.8 757.2 183.2 771.9 183.2C786.6 183.2 781 183.2 790.1 183.2C799.2 183.2 796.1 183.2 799.2 183.2 M743.3 163.8C750.3 164.2 752.9 163.8 764.1 165.1C775.4 166.4 768.4 169 777.1 167.7C785.7 166.4 782.3 164.2 790.1 161.2C797.9 158.1 791.8 160.3 800.5 158.6C809.1 156.8 808.2 158.6 816 156C823.8 153.4 818.6 155.1 823.8 150.8C829 146.5 829 145.6 831.6 143 M800.5 143C798.7 146.5 798.7 147.3 795.3 153.4C791.8 159.4 792.2 155.1 790.1 161.2C787.9 167.2 788.8 164.2 788.8 171.6C788.8 178.9 790.5 175.5 790.1 183.2C789.6 191 791.8 186.7 787.5 194.9C783.2 203.1 784.9 199.2 777.1 207.9C769.3 216.6 771 212.7 764.1 220.9C757.2 229.1 760.7 223.9 756.3 232.6C752 241.2 756.3 236.9 751.1 246.8C745.9 256.8 745.1 252 740.7 262.4C736.4 272.8 738.2 268.5 738.2 278C738.2 287.5 738.6 284.1 740.7 291C742.9 297.9 742.9 291 744.6 298.8C746.4 306.6 744.6 303.6 745.9 314.3C747.2 325.1 747.7 325.4 748.5 331 M712.2 143C712.6 148.2 711.8 144.7 713.5 158.6C715.2 172.4 717 168.1 717.4 184.5C717.8 201 716.5 194.1 714.8 207.9C713.1 221.7 713.9 213.1 712.2 226.1C710.5 239.1 709.2 235.6 709.6 246.8C710 258.1 710 252 713.5 259.8C717 267.6 712.6 265 720 270.2C727.3 275.4 728.6 268.5 735.6 275.4C742.5 282.3 739 285.8 740.7 291 M707 230C712.2 228.7 711.3 227.8 722.6 226.1C733.8 224.3 732.1 224.8 740.7 224.8C749.4 224.8 745.9 225.6 748.5 226.1 M707 253.3C712.2 252.5 712.2 251.9 722.6 250.7C733 249.6 729.5 249.5 738.2 250C746.8 250.4 745.1 251.3 748.5 252 M707 310.4C707 306.6 701.8 303.5 707 298.8C712.2 294 711.3 296.2 722.6 296.2C733.8 296.2 728.6 294.4 740.7 298.8C752.9 303.1 747.7 302.2 758.9 309.1C770.2 316.1 766.3 312.2 774.5 319.5C782.7 326.8 780.6 327.2 783.6 331 M707 310.4C710.5 313.5 711.8 312.7 717.4 319.5C723 326.4 721.7 327.2 723.9 331 M713.5 259.8C713.1 261.6 714.4 262.4 712.2 265C710 267.6 708.7 266.7 707 267.6 M262.8 331C261.9 335.3 258.9 335.3 260.2 344C261.5 352.6 264.1 347.4 266.7 357C269.3 366.5 266.7 362.2 268 372.5C269.3 382.9 271.5 378.6 270.6 388.1C269.7 397.6 270.2 391.6 265.4 401.1C260.7 410.6 260.7 407.6 256.3 416.7C252 425.8 253.7 424.5 252.4 428.4 M207 349.2C211.3 350.9 213.1 349.2 220 354.4C226.9 359.6 220.8 359.1 227.8 364.7C234.7 370.4 229.5 369.5 240.7 371.2C252 373 252 369.5 261.5 369.9C271 370.4 260.7 369.5 269.3 372.5C278 375.6 281.4 376.9 287.5 379 M305.7 324.7C306.1 326.8 307.4 322.9 306.9 331C306.5 339.1 305.7 338.8 304.4 349.2C303.1 359.6 306.9 354.4 303.1 362.2C299.2 369.9 297.9 366.9 292.7 372.5C287.5 378.2 288.3 373 287.5 379C286.6 385.1 290.1 383.4 290.1 390.7C290.1 398.1 285.7 395.9 287.5 401.1C289.2 406.3 292.7 404.6 295.3 406.3 M304.4 349.2C310 349.6 310.4 350.9 321.2 350.5C332 350 326.4 347.9 336.8 347.9C347.2 347.9 344.6 348.3 352.4 350.5C360.2 352.6 357.6 353.1 360.2 354.4 M353.7 331C355.8 335.3 358.4 336.2 360.2 344C361.9 351.8 362.3 348.3 358.9 354.4C355.4 360.4 353.7 354.4 349.8 362.2C345.9 369.9 348.1 366.5 347.2 377.7C346.3 389 345 386.4 347.2 395.9C349.4 405.4 351.5 402.8 353.7 406.3 M287.5 379C290.5 382.1 290.1 382.1 296.6 388.1C303.1 394.2 298.7 392.9 306.9 397.2C315.2 401.5 311.3 398.9 321.2 401.1C331.2 403.3 328.1 402.4 336.8 403.7C345.5 405 343.7 404.6 347.2 405 M306.9 397.2C306.9 403.7 305.7 406.7 306.9 416.7C308.2 426.6 306.1 422.3 310.8 427.1C315.6 431.8 314.3 428.8 321.2 430.9C328.1 433.1 328.1 432.7 331.6 433.5 M310.8 427.1C307.4 431.4 307.4 432.7 300.5 440C293.5 447.4 297 442.2 290.1 449.1C283.2 456 285.7 452.6 279.7 460.8C273.6 469 273.2 465.1 271.9 473.8C270.6 482.4 274.9 478.1 275.8 486.8C276.7 495.4 272.3 491.1 274.5 499.7C276.7 508.4 277.5 506.3 282.3 512.7C287 519.1 286.6 516.9 288.8 519 M353.7 406.3C349.8 411.5 349.4 412.8 342 421.9C334.6 430.9 336.4 425.8 331.6 433.5C326.9 441.3 329.4 436.1 327.7 445.2C326 454.3 326.9 450.4 326.4 460.8C326 471.2 325.6 467.7 326.4 476.4C327.3 485 325.6 479 329 486.8C332.5 494.6 333.3 489 336.8 499.7C340.3 510.5 338.5 512.6 339.4 519 M353.7 406.3C357.6 409.7 355.4 411 365.4 416.7C375.3 422.3 369.7 420.1 383.5 423.2C397.4 426.2 391.3 420.1 406.9 425.8C422.5 431.4 413.6 437 430.3 440C447 443.1 448.1 436.6 457 434.8 M358.9 395.9C364.5 396.3 364.1 397.2 375.7 397.2C387.4 397.2 383.5 398.5 393.9 395.9C404.3 393.3 395.6 392.4 406.9 389.4C418.1 386.4 414.7 388.1 427.7 386.8C440.6 385.5 436.1 387.5 445.8 385.5C455.6 383.6 453.3 382.5 457 381 M358.9 354.4C363.6 351.8 363.2 350.9 373.1 346.6C383.1 342.2 377 346.6 388.7 341.4C400.4 336.2 401.7 334.5 408.2 331 M374.4 331C378.3 335.3 376.2 334.9 386.1 344C396.1 353.1 393.1 351.3 404.3 358.3C415.5 365.2 408.6 361.7 419.9 364.7C431.1 367.8 425.7 368.2 438 367.3C450.4 366.5 450.7 363.9 457 362.2 M404.3 358.3C399.1 363.9 399.1 366 388.7 375.1C378.3 384.2 383.1 378.6 373.1 385.5C363.2 392.4 363.6 392.4 358.9 395.9 M432.9 331C433.7 334.5 432 332.7 435.5 341.4C438.9 350 440.2 343.1 443.2 357C446.3 370.8 444.1 365.6 444.5 382.9C445 400.2 444.1 391.6 444.5 408.9C445 426.2 444.1 419.3 445.8 434.8C447.6 450.4 446 441.8 449.7 455.6C453.5 469.5 454.6 472.9 457 476.4C459.4 479.8 457 469.5 457 466 M404.3 358.3C404.7 366.5 404.7 366 405.6 382.9C406.5 399.8 406 394.6 406.9 408.9C407.8 423.2 407.8 413.6 408.2 425.8C408.6 437.9 409.5 433.5 408.2 445.2C406.9 456.9 407.3 450.4 404.3 460.8C401.3 471.2 402.6 466 399.1 476.4C395.6 486.8 396.5 481.6 393.9 492C391.3 502.3 391.5 498.5 391.3 507.5C391.1 516.5 392.6 515.2 393.3 519 M406.9 416.7C413.8 416.2 415.1 416.2 427.7 415.4C440.2 414.5 438.9 414.5 444.5 414.1 M427.7 386.8C427.7 396.3 426.4 399.4 427.7 415.4C429 431.4 429 424.9 431.6 434.8C434.2 444.8 434.2 441.8 435.5 445.2 M207 389.4C210.5 392.4 208.7 392.9 217.4 398.5C226 404.1 223.4 400.2 233 406.3C242.5 412.3 239.5 409.3 245.9 416.7C252.4 424 250.3 424.5 252.4 428.4 M207 420.6C212.2 421 211.3 421 222.6 421.9C233.8 422.7 230.8 421 240.7 423.2C250.7 425.3 243.8 424.5 252.4 428.4C261.1 432.2 257.6 430.9 266.7 434.8C275.8 438.7 271.9 435.3 279.7 440C287.5 444.8 286.6 446.1 290.1 449.1 M222.6 421.9C220 427.9 220 429.7 214.8 440C209.6 450.4 209.6 448.7 207 453 M207 455.6C212.2 456.5 213.9 454.7 222.6 458.2C231.2 461.7 225.2 463.4 233 466C240.7 468.6 233 463.4 245.9 466C258.9 468.6 263.2 471.2 271.9 473.8 M252.4 428.4C254.6 431.4 259.4 430.9 258.9 437.4C258.5 443.9 255.9 438.3 251.1 447.8C246.4 457.3 246.8 459.9 244.6 466 M290.1 449.1C297 450.4 298.7 450 310.8 453C323 456 316 455.6 326.4 458.2C336.8 460.8 331.6 458.2 342 460.8C352.4 463.4 347.2 460.8 357.6 466C368 471.2 363.6 469.5 373.1 476.4C382.7 483.3 379.2 481.6 386.1 486.8C393.1 492 391.3 490.2 393.9 492 M251.1 489.4C258.9 488.5 259.8 487.6 274.5 486.8C289.2 485.9 283.2 487.6 295.3 486.8C307.4 485.9 300.5 484.2 310.8 484.2C321.2 484.2 312.6 485 326.4 486.8C340.3 488.5 336.8 487.6 352.4 489.4C368 491.1 359.3 490.2 373.1 492C387 493.7 380.1 492.8 393.9 494.6C407.8 496.3 400.8 495.4 414.7 497.1C428.5 498.9 421.3 500.6 435.5 499.7C449.6 498.9 449.8 496.3 457 494.6 M370.6 453C371 459.1 375.3 459.9 371.8 471.2C368.4 482.4 365.4 476.4 360.2 486.8C355 497.1 356.5 491.6 356.3 502.3C356.1 513.1 358.4 513.4 359.5 519 M393.9 494.6C397.4 498.9 396.1 499.4 404.3 507.5C412.5 515.7 413.8 515.2 418.6 519 M464.8 519C462.2 516 465 512.2 457 510.1C449 508.1 447.8 516.2 440.6 512.7C433.5 509.3 437.2 504.1 435.5 499.7 M329 476.4C330.7 476.4 330.3 479.8 334.2 476.4C338.1 472.9 338.1 471.2 340.7 466C343.3 460.8 341.6 462.5 342 460.8 M432.9 331C430.3 331 431.1 327.5 425.1 331C419 334.5 420.7 334.5 414.7 341.4C408.6 348.3 410.4 346.1 406.9 351.8C403.4 357.4 405.2 356.1 404.3 358.3 M457 340.1C462.2 338.8 461.3 337.9 472.6 336.2C483.8 334.5 478.6 335.8 490.7 334.9C502.9 334 495.5 334.9 508.9 333.6C522.3 332.3 523.6 331.9 531 331 M471.3 331C472.6 335.3 471.3 334.5 475.2 344C479.1 353.5 479.5 346.6 483 359.6C486.4 372.5 483.8 366.5 485.6 382.9C487.3 399.4 487.7 391.6 488.2 408.9C488.6 426.2 486 417.5 486.9 434.8C487.7 452.1 488.6 443.5 490.7 460.8C492.9 478.1 492.5 467.4 493.3 486.8C494.2 506.2 493.3 508.3 493.3 519 M457 362.2C462.2 362.2 463.1 360.4 472.6 362.2C482.1 363.9 475.2 363 485.6 367.3C495.9 371.7 492.5 370.4 503.7 375.1C515 379.9 508.9 378.2 519.3 381.6C529.7 385.1 522.8 383.8 534.9 385.5C547 387.2 541.8 385.5 555.7 386.8C569.5 388.1 562.6 387.7 576.4 389.4C590.3 391.1 585.1 389 597.2 392C609.3 395 602.4 395.5 612.8 398.5C623.1 401.5 617.1 400.2 628.3 401.1C639.6 402 634.4 402.6 646.5 401.1C658.6 399.6 658.6 398.2 664.7 396.7 M545.9 331C546.6 337.9 547.2 334.5 547.9 351.8C548.5 369.1 547.4 363.9 547.9 382.9C548.3 402 547.4 396.8 549.2 408.9C550.9 421 551.3 410.6 553.1 419.3C554.8 427.9 555.2 425.3 554.4 434.8C553.5 444.4 549.2 437.4 550.5 447.8C551.8 458.2 552.2 456.5 558.2 466C564.3 475.5 562.6 469.5 568.6 476.4C574.7 483.3 573 478.1 576.4 486.8C579.9 495.4 577.9 491.6 579 502.3C580.1 513.1 579.4 513.4 579.7 519 M457 403.7C462.2 405.4 462.2 406.3 472.6 408.9C483 411.5 476 410.2 488.2 411.5C500.3 412.8 493.3 411.9 508.9 412.8C524.5 413.6 520.2 411.9 534.9 414.1C549.6 416.2 540.9 415.8 553.1 419.3C565.2 422.7 558.2 421.9 571.2 424.5C584.2 427.1 579.9 425.8 592 427.1C604.1 428.4 597.2 426.6 607.6 428.4C618 430.1 618 430.9 623.1 432.2 M584.2 331C582.5 336.2 581.2 335.3 579 346.6C576.9 357.8 578.6 350.5 577.7 364.7C576.9 379 575.1 375.6 576.4 389.4C577.7 403.3 576.4 397.2 581.6 406.3C586.8 415.4 586.8 408.9 592 416.7C597.2 424.5 595 419.3 597.2 429.7C599.4 440 597.6 435.7 598.5 447.8C599.4 459.9 598.9 453 599.8 466C600.6 479 599.4 474.6 601.1 486.8C602.8 498.9 603.7 491.6 605 502.3C606.3 513.1 605 513.4 605 519 M579 346.6C585.1 347.9 585.9 348.7 597.2 350.5C608.4 352.2 598.9 350.5 612.8 351.8C626.6 353.1 623.1 351.8 638.7 354.4C654.3 357 644.6 356.1 659.5 359.6C674.4 363 675.4 363 683.4 364.7 M610.2 331C610.2 335.3 609.3 335.3 610.2 344C611 352.6 611.9 347.4 612.8 357C613.6 366.5 609.3 362.2 612.8 372.5C616.2 382.9 618 378.6 623.1 388.1C628.3 397.6 628.3 391.6 628.3 401.1C628.3 410.6 625.7 406.3 623.1 416.7C620.6 427.1 621 422.7 620.6 432.2C620.1 441.8 621 434 621.8 445.2C622.7 456.5 621.8 453.9 623.1 466C624.4 478.1 624.9 476.4 625.7 481.6 M457 434.8C463.1 435.7 462.2 435.7 475.2 437.4C488.2 439.2 482.1 439.6 495.9 440C509.8 440.5 506.3 437 516.7 438.7C527.1 440.5 521.9 437.9 527.1 445.2C532.3 452.6 530.6 450.4 532.3 460.8C534 471.2 532.3 471.2 532.3 476.4 M457 466C457 466 451.8 466.4 457 466C462.2 465.6 461.3 464.7 472.6 464.7C483.8 464.7 478.6 463.8 490.7 466C502.9 468.2 495.1 467.7 508.9 471.2C522.8 474.6 516.7 472.9 532.3 476.4C547.9 479.8 540.1 479 555.7 481.6C571.2 484.2 563.4 484.6 579 484.2C594.6 483.7 586.8 484.2 602.4 480.3C618 476.4 611.9 476.4 625.7 472.5C639.6 468.6 630.9 470.8 643.9 468.6C656.9 466.4 649.1 467.7 664.7 466C680.3 464.3 676.5 465.1 690.6 463.4C704.8 461.7 700.7 461.7 707 460.8C713.3 459.9 708.7 460.8 709.6 460.8 M554.4 434.8C560.8 435.7 559.5 435.7 573.8 437.4C588.1 439.2 581.2 437.4 597.2 440C613.2 442.6 607.1 443.9 621.8 445.2C636.6 446.5 627 444.8 641.3 443.9C655.6 443.1 650 442.2 664.7 442.6C679.4 443.1 671.3 446.1 685.5 445.2C699.6 444.4 698.1 441.8 707 440C715.9 438.3 710.5 440 712.2 440 M638.7 381.6C640 386.4 642.6 387.7 642.6 395.9C642.6 404.1 639.6 397.6 638.7 406.3C637.9 414.9 639.2 409.3 640 421.9C640.9 434.4 640.5 429.2 641.3 443.9C642.2 458.6 641.8 455.2 642.6 466C643.5 476.8 646.1 470.3 643.9 476.4C641.8 482.4 641.3 481.6 636.1 484.2C630.9 486.8 630.9 484.2 628.3 484.2 M646.5 401.1C651.7 403.7 652.6 402.8 662.1 408.9C671.6 414.9 667.3 410.6 675.1 419.3C682.9 427.9 680.3 424.5 685.5 434.8C690.6 445.2 686.3 441.8 690.6 450.4C695 459.1 693 453.9 698.4 460.8C703.9 467.7 704.1 471.2 707 471.2C709.9 471.2 707 464.3 707 460.8 M690.6 331C689.8 332.7 689.3 332.4 688 336.2C686.8 340 687.9 338.1 687 342.4C686.1 346.7 686.7 341.7 685.5 349.2C684.2 356.6 684.1 355.4 683.4 364.7C682.7 374.1 682.6 369.7 683.4 377.2C684.2 384.7 682.4 381.9 685.7 387.3C689 392.8 687.4 389.4 693.2 393.6C699 397.7 698.5 396.9 703.1 399.8C707.7 402.7 704 402.8 707 402.4C710 402 710.5 399.8 712.2 398.5 M687 342.4C691.2 344.5 692.8 345.4 699.5 348.7C706.1 351.9 704.5 351.1 707 352.3 M643.9 476.4C650.8 476.4 652.6 472.9 664.7 476.4C676.8 479.8 671.6 479.8 680.3 486.8C688.9 493.7 683.7 493.7 690.6 497.1C697.6 500.6 697.6 497.1 701 497.1 M625.7 486.8C624.9 492 623.1 491.6 623.1 502.3C623.1 513.1 624.9 513.4 625.7 519 M457 494.6C462.2 495.4 460.5 499.7 472.6 497.1C484.7 494.6 486.4 490.2 493.3 486.8 M519.3 499.7C524.5 498.9 522.8 503.2 534.9 497.1C547 491.1 548.7 486.8 555.7 481.6 M641.3 331C645 334 647.7 332.9 652.2 340.1C656.7 347.3 653.2 344.3 654.8 352.5C656.5 360.8 654.7 356.5 657.2 364.7C659.6 373 659.4 368.9 662.1 377.2C664.8 385.5 664.3 383 665.2 389.7C666.1 396.3 663.2 392.2 664.7 397.2C666.2 402.2 668.6 399.8 669.6 404.7C670.7 409.7 668.4 409.6 667.8 412 M646.5 401.6C645.5 403.4 644.6 403.2 643.4 407.1C642.2 411 639.2 411.7 642.9 413.3C646.6 414.9 646.3 412.4 654.6 412C662.9 411.6 663.4 412 667.8 412 M664.7 479C663.8 483.3 660.4 482.4 662.1 492C663.8 501.5 665.1 498.5 669.9 507.5C674.6 516.5 674.2 515.2 676.4 519 M462.2 359.6C461.3 367.3 460 368.2 459.6 382.9C459.2 397.6 459.6 386.4 460.9 403.7C462.2 421 463.1 414.1 463.5 434.8C463.9 455.6 460.9 447 462.2 466C463.5 485 466.5 474.3 467.4 492C468.2 509.6 465.7 510 464.8 519C463.9 528 464.8 519 464.8 519 M472.6 362.2C470.8 365.6 470.8 368.2 467.4 372.5C463.9 376.9 465.7 372.3 462.2 375.1C458.7 377.9 458.7 379 457 381 M723.9 331C726 335.3 725.2 336.2 730.4 344C735.6 351.8 735.1 346.6 739.5 354.4C743.8 362.2 739.5 358.7 743.3 367.3C747.2 376 748.5 376 751.1 380.3 M748.5 331C747.7 334.5 749 333.6 745.9 341.4C742.9 349.2 744.6 349.2 739.5 354.4C734.3 359.6 733.8 353.5 730.4 357C726.9 360.4 727.3 360.4 729.1 364.7C730.8 369.1 728.2 368.2 735.6 369.9C742.9 371.7 739 369.5 751.1 369.9C763.2 370.4 758.1 367.8 771.9 371.2C785.7 374.7 785.7 377.3 792.7 380.3 M773.2 351.8C773.6 356.1 774.9 358.3 774.5 364.7C774.1 371.2 772.8 369.1 771.9 371.2 M783.6 331C787.5 336.2 788.8 337.1 795.3 346.6C801.8 356.1 802.2 351.8 803.1 359.6C803.9 367.3 800.5 363.5 797.9 369.9C795.3 376.4 796.1 376 795.3 379 M803.1 359.6 L810.8 350.5 M707 352.3C708.7 353.6 705.1 353.8 712.2 356.2C719.3 358.5 719.2 360.1 728.3 359.3C737.4 358.5 735.7 355.7 739.5 353.8 M707 382.9C708.7 388.1 711.3 386.4 712.2 398.5C713.1 410.6 709.6 405.4 709.6 419.3C709.6 433.1 712.2 426.2 712.2 440C712.2 453.9 708.7 445.2 709.6 460.8C710.5 476.4 713.9 467.4 714.8 486.8C715.7 506.1 713.1 508.2 712.2 519 M207 526.8C212.2 528.1 211.3 529.8 222.6 530.7C233.8 531.5 228.6 529 240.7 529.4C252.9 529.8 247.7 529 258.9 532C270.2 535 267.6 532.4 274.5 538.5C281.4 544.5 278.4 542.4 279.7 550.2C281 557.9 278.8 557.9 278.4 561.8 M207 564.4C212.2 564.9 211.3 564.9 222.6 565.7C233.8 566.6 228.6 566.2 240.7 567C252.9 567.9 246.4 570.1 258.9 568.3C271.5 566.6 267.1 561.8 278.4 561.8C289.6 561.8 281.9 564 292.7 568.3C303.5 572.7 297 570.1 310.8 574.8C324.7 579.6 320.4 579.6 334.2 582.6C348.1 585.6 339.4 583.9 352.4 583.9C365.4 583.9 359.3 583.5 373.1 582.6C387 581.7 380.1 582.2 393.9 581.3C407.8 580.4 401.7 581.7 414.7 580C427.7 578.3 421.6 579.1 432.9 576.1C444.1 573.1 443.2 572.7 448.4 570.9 M288.8 519C291.8 523.3 295.3 523.3 297.9 532C300.5 540.6 298.3 536.3 296.6 545C294.8 553.6 293.1 550.2 292.7 557.9C292.2 565.7 296.1 559.7 295.3 568.3C294.4 577 294.4 575.2 290.1 583.9C285.7 592.6 289.2 590 282.3 594.3C275.4 598.6 273.6 596 269.3 596.9 M279.7 550.2C285.7 552.7 284.9 557.1 297.9 557.9C310.8 558.8 305.7 556.6 318.6 552.7C331.6 548.9 325.6 548.9 336.8 546.3C348.1 543.7 340.3 544.1 352.4 545C364.5 545.8 361 547.1 373.1 548.9C385.3 550.6 376.6 550.6 388.7 550.2C400.8 549.7 395.6 547.6 409.5 547.6C423.3 547.6 417.3 548.4 430.3 550.2C443.2 551.9 442.4 551.9 448.4 552.7 M339.4 519C339 523.3 339.4 522.9 338.1 532C336.8 541.1 336.8 535 335.5 546.3C334.2 557.5 334.6 553.6 334.2 565.7C333.8 577.8 333.3 572.2 334.2 582.6C335.1 593 337.7 588.7 336.8 596.9C335.9 605.1 336.8 601.2 331.6 607.3C326.4 613.3 328.1 609.9 321.2 615.1C314.3 620.2 315.2 613.3 310.8 622.8C306.5 632.4 308.2 631.5 308.2 643.6C308.2 655.7 311.3 648.8 310.8 659.2C310.4 669.6 308.7 664.4 306.9 674.8C305.2 685.1 304.4 679.6 305.7 690.3C306.9 701.1 309.1 701.4 310.8 707 M359.5 519C358 523.3 357.4 523.3 355 532C352.6 540.6 353.7 533.7 352.4 545C351.1 556.2 351.1 552.7 351.1 565.7C351.1 578.7 352.8 571.8 352.4 583.9C351.9 596 350.2 589.1 349.8 602.1C349.4 615.1 351.1 610.7 351.1 622.8C351.1 635 352.8 629.8 349.8 638.4C346.8 647.1 345 640.1 342 648.8C339 657.5 340.7 654 340.7 664.4C340.7 674.8 342 665.8 342 680C342 694.1 341.1 698 340.7 707 M393.3 519C393.1 524.2 394.1 524.2 392.6 534.6C391.1 545 391.8 538 388.7 550.2C385.7 562.3 386.1 557.1 383.5 570.9C380.9 584.8 380.9 578.7 380.9 591.7C380.9 604.7 380.9 597.7 383.5 609.9C386.1 622 385.3 617.7 388.7 628C392.2 638.4 393.9 633.2 393.9 641C393.9 648.8 389.2 641.9 388.7 651.4C388.3 660.9 390.9 658.3 392.6 669.6C394.3 680.8 393.9 672.7 393.9 685.1C393.9 697.6 393.1 699.7 392.6 707 M290.1 583.9C294.4 588.2 293.5 588.2 303.1 596.9C312.6 605.5 309.1 602.1 318.6 609.9C328.1 617.7 321.2 610.7 331.6 620.2C342 629.8 337.7 631.5 349.8 638.4C361.9 645.3 355 639.3 368 641C380.9 642.7 381.8 642.7 388.7 643.6 M418.6 519C419 524.2 422.9 525.1 419.9 534.6C416.8 544.1 413.8 538.9 409.5 547.6C405.2 556.2 405.2 549.7 406.9 560.5C408.6 571.4 409.5 567.9 414.7 580C419.9 592.1 418.1 586.9 422.5 596.9C426.8 606.8 425.9 605.5 427.7 609.9 M440.6 512.7C441.1 514.8 441.1 511.7 441.9 519C442.8 526.3 442.4 523.3 443.2 534.6C444.1 545.8 442.8 540.6 444.5 552.7C446.3 564.9 446.3 559.7 448.4 570.9C450.6 582.2 451 575.2 451 586.5C451 597.7 451.9 592.6 448.4 604.7C445 616.8 445.8 612.5 440.6 622.8C435.5 633.2 437.2 625.4 432.9 635.8C428.5 646.2 430.3 641 427.7 654C425.1 667 425.1 662.6 425.1 674.8C425.1 686.9 428.5 679.6 427.7 690.3C426.8 701.1 424.2 701.4 422.5 707 M448.4 570.9C444.1 577.8 443.2 580.4 435.5 591.7C427.7 602.9 433.7 596.9 425.1 604.7C416.4 612.5 419.9 609 409.5 615.1C399.1 621.1 402.6 617.7 393.9 622.8C385.3 628 387 628 383.5 630.6 M207 635.8C212.2 637.1 211.3 638 222.6 639.7C233.8 641.4 228.6 639.7 240.7 641C252.9 642.3 247.7 643.6 258.9 643.6C270.2 643.6 263.2 642.7 274.5 641C285.7 639.3 280.6 638 292.7 638.4C304.8 638.9 298.7 638.9 310.8 642.3C323 645.8 318.6 646.6 329 648.8C339.4 651 337.7 648.8 342 648.8 M212.2 648.8C214.8 652.3 213.9 652.7 220 659.2C226 665.7 223.4 663.1 230.4 668.3C237.3 673.5 231.2 671.7 240.7 674.8C250.3 677.8 245.9 678.2 258.9 677.4C271.9 676.5 265.4 673 279.7 672.2C294 671.3 289.6 675.6 301.8 674.8C313.9 673.9 306.9 673 316 669.6C325.1 666.1 320.4 666.1 329 664.4C337.7 662.6 337.7 664.4 342 664.4 M207 677.4C211.3 676.5 212.2 677.8 220 674.8C227.8 671.7 226.9 670.4 230.4 668.3 M274.5 641C272.8 645.3 274.5 646.2 269.3 654C264.1 661.8 262.4 656.6 258.9 664.4C255.5 672.2 258.9 673 258.9 677.4 M301.8 674.8C302.2 679.1 305.2 679.1 303.1 687.7C300.9 696.4 298.7 694.3 295.3 700.7C291.8 707.1 293.5 704.9 292.7 707 M388.7 651.4C394.8 649.7 395.6 649.7 406.9 646.2C418.1 642.7 413.8 644.5 422.5 641C431.1 637.6 424.2 638.4 432.9 635.8C441.5 633.2 440.4 633.7 448.4 633.2C456.5 632.8 454.1 634.1 457 634.5 M457 583.9C457 587.4 462.5 590 457 594.3C451.5 598.6 450.4 591.7 440.6 596.9C430.9 602.1 437.2 602.9 427.7 609.9C418.1 616.8 417.3 615.1 412.1 617.7 M457 545C455 547.6 453.9 544.1 451 552.7C448.2 561.4 449.3 564.9 448.4 570.9 M207 695.5C212.2 696.4 209.6 696.4 222.6 698.1C235.6 699.9 238.2 699.9 245.9 700.7 M362.8 707C364.5 704 361 701.9 368 698.1C374.9 694.3 374.9 699.9 383.5 695.5C392.2 691.2 390.5 688.6 393.9 685.1 M316 669.6C316.9 674.8 315.2 675.6 318.6 685.1C322.1 694.7 318.6 691.2 326.4 698.1C334.2 705.1 336.8 703.3 342 705.9 M427.7 609.9 L440.6 622.8 M406.9 560.5C412.1 561.4 411.2 563.1 422.5 563.1C433.7 563.1 429.1 560.8 440.6 560.5C452.2 560.3 451.5 561.8 457 562.5 M457 545C457 541.5 451.8 538.9 457 534.6C462.2 530.2 461.3 533.7 472.6 532C483.8 530.2 478.6 531.1 490.7 529.4C502.9 527.7 497.7 529.4 508.9 526.8C520.2 524.2 519.3 523.3 524.5 521.6 M493.3 519C492.9 524.2 492.9 523.3 492 534.6C491.2 545.8 489.5 541.5 490.7 552.7C492 564 493.3 557.1 495.9 568.3C498.5 579.6 498.5 574.4 498.5 586.5C498.5 598.6 497.7 592.6 495.9 604.7C494.2 616.8 493.3 610.7 493.3 622.8C493.3 635 497.7 629.8 495.9 641C494.2 652.3 491.6 645.3 488.2 656.6C484.7 667.8 489.9 665.2 485.6 674.8C481.2 684.3 479.5 674.4 475.2 685.1C470.8 695.9 473.4 699.7 472.6 707 M457 562.5C462.2 561.8 461.3 561.6 472.6 560.5C483.8 559.5 476.9 559.2 490.7 559.2C504.6 559.2 499.4 561.8 514.1 560.5C528.8 559.2 521 558.4 534.9 555.3C548.7 552.3 542.7 553.2 555.7 551.5C568.6 549.7 567.8 550.6 573.8 550.2 M519.3 519C518.4 524.2 518 522.5 516.7 534.6C515.4 546.7 514.5 541.5 515.4 555.3C516.3 569.2 515.4 563.1 519.3 576.1C523.2 589.1 524.1 583.9 527.1 594.3C530.1 604.7 528.4 597.7 528.4 607.3C528.4 616.8 527.5 617.7 527.1 622.8 M457 583.9C457 583.9 453.5 585.6 457 583.9C460.5 582.2 459.6 581.7 467.4 578.7C475.2 575.7 470.8 572.2 480.4 574.8C489.9 577.4 486.4 579.1 495.9 586.5C505.5 593.9 498.5 590 508.9 596.9C519.3 603.8 513.2 603.8 527.1 607.3C540.9 610.7 539.2 608.1 550.5 607.3C561.7 606.4 557.4 605.5 560.8 604.7 M448.4 604.7C451.3 607.3 449 610.3 457 612.5C465 614.6 460.5 613.8 472.6 611.2C484.7 608.6 481.2 606.4 493.3 604.7C505.5 602.9 497.7 605.1 508.9 606C520.2 606.8 521 606.8 527.1 607.3 M457 634.5C462.2 634.1 460.5 635.4 472.6 633.2C484.7 631.1 478.6 630.6 493.3 628C508.1 625.4 505.5 627.2 516.7 625.4C528 623.7 518.4 622 527.1 622.8C535.7 623.7 534 625 542.7 628C551.3 631.1 549.6 630.6 553.1 631.9 M579.7 519C577.7 524.2 575.8 524.2 573.8 534.6C571.9 545 572.1 541.5 573.8 550.2C575.6 558.8 574.3 554 579 560.5C583.8 567 580.3 569.6 588.1 569.6C595.9 569.6 593.3 566.2 602.4 560.5C611.5 554.9 608.4 561.4 615.4 552.7C622.3 544.1 619.7 545.8 623.1 534.6C626.6 523.3 624.9 524.2 625.7 519 M588.1 569.6C581.6 575.2 579.4 576.5 568.6 586.5C557.8 596.4 561.7 591.7 555.7 599.5C549.6 607.3 551.3 602.1 550.5 609.9C549.6 617.7 552.2 615.5 553.1 622.8C553.9 630.2 554.8 625 553.1 631.9C551.3 638.9 551.3 637.1 547.9 643.6C544.4 650.1 545.3 644.5 542.7 651.4C540.1 658.3 539.2 654.9 540.1 664.4C540.9 673.9 542.7 669.6 545.3 680C547.9 690.3 547 690.3 547.9 695.5 M615.4 534.6C614.5 540.6 612.8 540.6 612.8 552.7C612.8 564.9 614.9 558.8 615.4 570.9C615.8 583 614.1 577 614.1 589.1C614.1 601.2 613.2 596.9 615.4 607.3C617.5 617.7 619.3 609.9 620.6 620.2C621.8 630.6 620.1 627.2 619.3 638.4C618.4 649.7 620.1 643.6 618 654C615.8 664.4 616.2 659.2 612.8 669.6C609.3 680 608.4 672.7 607.6 685.1C606.7 697.6 609.3 699.7 610.2 707 M605 519C607.6 523.3 606.7 526.8 612.8 532C618.8 537.2 614.5 530.2 623.1 534.6C631.8 538.9 628.3 539.8 638.7 545C649.1 550.2 645.6 550.2 654.3 550.2C663 550.2 661.2 546.7 664.7 545 M625.7 519C625.7 519 623.1 513.8 625.7 519C628.3 524.2 625.7 525.1 633.5 534.6C641.3 544.1 639.6 539.8 649.1 547.6C658.6 555.3 652.6 550.2 662.1 557.9C671.6 565.7 669 558.8 677.7 570.9C686.3 583 685.5 580.4 688 594.3C690.6 608.1 685.5 601.2 685.5 612.5C685.5 623.7 688 617.7 688 628C688 638.4 688 635 685.5 643.6C682.9 652.3 682 650.5 680.3 654 M623.1 576.1C628.3 578.7 628.3 577 638.7 583.9C649.1 590.8 647.4 588.2 654.3 596.9C661.2 605.5 656 602.1 659.5 609.9C663 617.7 655.2 614.2 664.7 620.2C674.2 626.3 673.9 625.4 688 628C702.2 630.6 700.7 628 707 628 M664.7 545C670.7 545 668.8 545.8 682.9 545C697 544.1 699 543.2 707 542.4 M676.4 519C679.4 523.3 680.7 520.7 685.5 532C690.2 543.2 687.2 539.8 690.6 552.7C694.1 565.7 692.4 557.9 695.8 570.9C699.3 583.9 697.3 583 701 591.7C704.8 600.3 705 595.2 707 596.9 M664.7 620.2C658.6 619.4 657.8 618.1 646.5 617.7C635.3 617.2 639.6 618.1 630.9 618.9C622.3 619.8 630.1 620.7 620.6 620.2C611 619.8 613.6 617.2 602.4 617.7C591.1 618.1 598.1 618.9 586.8 621.5C575.6 624.1 579.9 622 568.6 625.4C557.4 628.9 558.2 629.8 553.1 631.9 M553.1 631.9C559.1 635 562.6 635.4 571.2 641C579.9 646.6 571.2 645.3 579 648.8C586.8 652.3 581.6 649.7 594.6 651.4C607.6 653.1 603.2 652.3 618 654C632.7 655.7 624.9 656.6 638.7 656.6C652.6 656.6 647.4 656.6 659.5 654C671.6 651.4 666.4 652.3 675.1 648.8C683.7 645.3 682 645.3 685.5 643.6 M457 664.4C462.2 662.6 462.2 661.8 472.6 659.2C483 656.6 476 658.3 488.2 656.6C500.3 654.9 496.8 654 508.9 654C521 654 513.2 657.5 524.5 656.6C535.7 655.7 536.6 653.1 542.7 651.4 M540.1 664.4C534 666.1 532.3 666.1 521.9 669.6C511.5 673 519.3 673 508.9 674.8C498.5 676.5 502.9 673.9 490.7 674.8C478.6 675.6 483.8 675.6 472.6 677.4C461.3 679.1 462.2 679.1 457 680 M472.6 707C476 704 473.4 701.9 483 698.1C492.5 694.3 488.2 695.5 501.1 695.5C514.1 695.5 506.3 698.1 521.9 698.1C537.5 698.1 532.3 695.5 547.9 695.5C563.4 695.5 555.7 699 568.6 698.1C581.6 697.3 573.8 697.3 586.8 692.9C599.8 688.6 594.6 686.9 607.6 685.1C620.6 683.4 611.9 687.7 625.7 687.7C639.6 687.7 636.1 689.5 649.1 685.1C662.1 680.8 655.2 681.7 664.7 674.8C674.2 667.8 670.7 666.1 677.7 664.4C684.6 662.6 675.7 667.8 685.5 669.6C695.2 671.3 699.8 669.6 707 669.6 M664.7 674.8C663.8 680 661.2 679.6 662.1 690.3C663 701.1 665.5 701.4 667.3 707 M685.5 643.6C687.2 648.8 685.5 648.8 690.6 659.2C695.8 669.6 695.6 666.5 701 674.8C706.5 683 705 680.8 707 683.8 M662.1 643.6 L659.5 654 M625.7 687.7C623.1 692.1 618 694.3 618 700.7C618 707.1 623.1 704.9 625.7 707 M547.9 695.5 L545.3 707 M568.6 698.1 L573.8 707 M457 545C460.5 546.7 462.2 545 467.4 550.2C472.6 555.3 470 551.9 472.6 560.5C475.2 569.2 472.6 571.4 475.2 576.1C477.8 580.9 478.6 575.2 480.4 574.8 M472.6 560.5C476 564 475.2 562.3 483 570.9C490.7 579.6 491.6 581.3 495.9 586.5 M662.1 519C663 523.3 663.8 523.3 664.7 532C665.5 540.6 666.4 538 664.7 545C663 551.9 661.2 550.2 659.5 552.7 M579 560.5C579.9 568.3 578.6 580.9 581.6 583.9C584.6 586.9 585.9 574.4 588.1 569.6 M560.8 604.7C565.2 602.1 564.3 600.3 573.8 596.9C583.3 593.4 579.9 590.8 589.4 594.3C598.9 597.7 598.1 602.9 602.4 607.3 M707 612.5C712.2 610.7 711.3 609.9 722.6 607.3C733.8 604.7 728.6 604.7 740.7 604.7C752.9 604.7 745.1 606.8 758.9 607.3C772.8 607.7 774.5 606.4 782.3 606 M707 669.6C712.2 670 711.3 670.9 722.6 670.9C733.8 670.9 728.6 670.9 740.7 669.6C752.9 668.3 749 666.5 758.9 667C768.9 667.4 761.9 671.7 770.6 670.9C779.3 670 774.9 670 784.9 664.4C794.8 658.8 791.8 659.2 800.5 654C809.1 648.8 802.2 652.3 810.8 648.8C819.5 645.3 816 647.1 826.4 643.6C836.8 640.1 829.9 641 842 638.4C854.1 635.8 851.5 638.4 862.8 635.8C874 633.2 868 636.3 875.7 630.6C883.5 625 882.7 622.8 886.1 618.9 M782.3 606C783.2 609.9 787.5 610.3 784.9 617.7C782.3 625 783.2 621.1 774.5 628C765.8 635 765.8 631.5 758.9 638.4C752 645.3 753.7 641.9 753.7 648.8C753.7 655.7 753.3 651.8 758.9 659.2C764.5 666.5 764.5 662.2 770.6 670.9C776.7 679.5 772.3 676.1 777.1 685.1C781.9 694.2 780.6 690.9 784.9 698.1C789.2 705.4 788.3 704 790.1 707 M803.1 604.7C803.9 610.7 803.1 612.5 805.7 622.8C808.2 633.2 808.2 625.4 810.8 635.8C813.4 646.2 813.4 642.7 813.4 654C813.4 665.2 810 659.2 810.8 669.6C811.7 680 810.8 675.6 816 685.1C821.2 694.7 822.1 690.9 826.4 698.1C830.7 705.4 828.1 704 829 707 M836.8 604.7C837.7 609 837.7 606.4 839.4 617.7C841.1 628.9 842.9 626.3 842 638.4C841.1 650.5 836.8 643.6 836.8 654C836.8 664.4 836.8 662.6 842 669.6C847.2 676.5 845.5 669.6 852.4 674.8C859.3 680 857.6 677.4 862.8 685.1C868 692.9 864.5 690.9 868 698.1C871.4 705.4 871.4 704 873.1 707 M875.7 602.1C874.9 605.5 869.7 606.8 873.1 612.5C876.6 618.1 879.2 613.8 886.1 618.9C893.1 624.1 889.6 620.7 893.9 628C898.2 635.4 898.2 630.6 899.1 641C900 651.4 900.8 648.8 896.5 659.2C892.2 669.6 890.5 663.5 886.1 672.2C881.8 680.8 883.5 675.6 883.5 685.1C883.5 694.7 885.3 695.5 886.1 700.7 M842 638.4C845.5 643.6 845.5 645.3 852.4 654C859.3 662.6 859.3 654 862.8 664.4C866.2 674.8 862.8 678.2 862.8 685.1 M813.4 654C817.8 655.7 816.9 654 826.4 659.2C835.9 664.4 836.8 666.1 842 669.6 M740.7 604.7C742.5 610.7 742.5 612.5 745.9 622.8C749.4 633.2 752.9 625.4 751.1 635.8C749.4 646.2 744.2 642.7 740.7 654C737.3 665.2 739.9 658.3 740.7 669.6C741.6 680.8 740.7 675.3 743.3 687.7C745.9 700.2 746.8 700.6 748.5 707 M707 648.8C712.2 647.9 711.3 648.8 722.6 646.2C733.8 643.6 731.2 644.5 740.7 641C750.3 637.6 747.7 637.6 751.1 635.8 M784.9 617.7C788.3 621.1 788.3 626.3 795.3 628C802.2 629.8 797 626.3 805.7 622.8C814.3 619.4 810 619.4 821.2 617.7C832.5 615.9 828.1 619.4 839.4 617.7C850.6 615.9 843.7 614.2 855 612.5C866.2 610.7 867.1 612.5 873.1 612.5 M795.3 628C794.4 633.2 790.9 635 792.7 643.6C794.4 652.3 797.9 650.5 800.5 654 M707 683.8C712.2 684.3 711.3 683 722.6 685.1C733.8 687.3 728.6 690.3 740.7 690.3C752.9 690.3 746.8 686.9 758.9 685.1C771 683.4 764.1 683.4 777.1 685.1C790.1 686.9 784.9 690.3 797.9 690.3C810.8 690.3 810 686.9 816 685.1 M722.6 670.9C720.8 675.6 720.8 673.1 717.4 685.1C713.9 697.2 713.9 699.7 712.2 707 M826.4 698.1C833.3 697.3 833.3 695.5 847.2 695.5C861 695.5 861 697.3 868 698.1 M758.9 659.2C754.6 660.9 752 660.9 745.9 664.4C739.9 667.8 742.5 667.8 740.7 669.6 M852.4 604.7 L855 612.5 M818.6 604.7 L821.2 617.7 M789.8 162.9C792 161.4 789.8 159.6 796.4 158.3C803 156.9 803 156.7 809.7 158.8C816.3 160.9 813.8 158.8 816.3 164.6C818.8 170.4 816.8 172.3 817.1 176.2 M797.2 158.3C797.5 162.6 798.6 165.2 798 171.2C797.5 177.2 796.4 174.5 795.6 176.2 M821.3 159.6C822.4 156.3 824 155.2 824.6 149.6C825.1 144.1 823.5 145.2 822.9 143 M809.7 158.8C812.4 156.8 811.3 157.1 817.9 153C824.6 148.8 824.6 149.6 829.6 146.3C834.5 143 831.8 144.1 832.9 143 M875.6 610.9C877.2 609.8 876.2 608.2 880.4 607.7C884.7 607.2 885.2 606.1 888.4 609.3C891.5 612.5 890.5 613 890 617.3C889.4 621.5 890.5 621 886.8 622C883.1 623.1 882.5 623.1 878.8 620.4C875.1 617.8 876.7 617.3 875.6 614.1C874.6 610.9 875.6 612 875.6 610.9 M890 609.3C892.1 607.8 891 606.4 896.3 604.9C901.6 603.3 902.7 604.6 905.9 604.5 M890 623.6C892.1 626.3 893.4 626.3 896.3 631.6C899.2 636.9 898.2 632.6 898.7 639.5C899.2 646.4 896.6 644.3 897.9 652.2C899.2 660.2 901.1 659.7 902.7 663.4 M897.9 657C895.3 658.1 894.2 657.5 890 660.2C885.7 662.8 887 659.1 885.2 665C883.3 670.8 884.4 669.2 884.4 677.7C884.4 686.1 885.4 683 885.2 690.4C884.9 697.8 884.1 696.7 883.6 699.9" fill="none" stroke="#f9cd9b" stroke-width="1.3" stroke-linecap="round" stroke-linejoin="round"/>
<g font-family="Liberation Sans,Noto Sans CJK SC,sans-serif" font-size="10.4" fill="#6b6b6b" stroke="#f6f6f5" stroke-width="1.6" paint-order="stroke" stroke-linejoin="round">
<text x="297.9" y="186.9">临汾</text>
<text x="392.6" y="179.2">长治</text>
<text x="377" y="230.3">晋城</text>
<text x="399.6" y="249.7">焦作</text>
<text x="268" y="263.5">运城</text>
<text x="353.2" y="292.6">洛阳</text>
<text x="436.8" y="333.1">许昌</text>
<text x="560.8" y="159.7">聊城</text>
<text x="467.9" y="186.2">安阳</text>
<text x="462.2" y="211.1">鹤壁</text>
<text x="505" y="210.3">濮阳</text>
<text x="531.8" y="248.5">菏泽</text>
<text x="462.7" y="279.9">开封</text>
<text x="541.9" y="306.9">商丘</text>
<text x="626.3" y="178.4">泰安</text>
<text x="596.7" y="235.5">济宁</text>
<text x="638" y="322.2">徐州</text>
<text x="700.5" y="257.7">临沂</text>
<text x="820.4" y="187.7">青岛</text>
<text x="768.8" y="235.2">日照</text>
<text x="751.7" y="294.4">连云港</text>
<text x="445.8" y="366.4">漯河</text>
<text x="361.5" y="405.8">南阳</text>
<text x="445.8" y="405.7">驻马店</text>
<text x="256.3" y="432.7">十堰</text>
<text x="334.2" y="475.9">襄阳</text>
<text x="408.2" y="498.2">随州</text>
<text x="449.7" y="466.3">信阳</text>
<text x="549.2" y="347.2">亳州</text>
<text x="618.7" y="361.4">宿州</text>
<text x="643.9" y="412.6">蚌埠</text>
<text x="551" y="414.1">阜阳</text>
<text x="622.4" y="435.9">淮南</text>
<text x="695.8" y="338.7">宿迁</text>
<text x="807.5" y="381.9">盐城</text>
<text x="338.1" y="542.9">荆门</text>
<text x="284.9" y="566.8">宜昌</text>
<text x="340.7" y="591">荆州</text>
<text x="393.9" y="657.2">岳阳</text>
<text x="237.4" y="673.3">张家界</text>
<text x="309" y="679.2">常德</text>
<text x="442" y="550.7">孝感</text>
<text x="505.8" y="599.8">黄石</text>
<text x="463.5" y="624.2">咸宁</text>
<text x="559.5" y="636.4">九江</text>
<text x="627.8" y="577.5">安庆</text>
<text x="668.6" y="548.9">铜陵</text>
<text x="631.7" y="662.9">景德镇</text>
<text x="699.7" y="633">黄山</text>
<text x="893.1" y="622.9">宁波</text>
<text x="777.1" y="675.9">金华</text>
<text x="730.4" y="682.9">衢州</text>
<text x="881.5" y="703.7">台州</text>
<text x="476" y="146.7">邯郸</text>
<text x="348" y="709.7">益阳</text>
<text x="705" y="521">芜湖</text>
<text x="628" y="146.2">济南</text>
<text x="224" y="345.7" text-anchor="end">商洛</text>
<text x="217" y="596.7" text-anchor="end">恩州</text>
</g>
<g fill="#f5a9a9" stroke="#e06a6a" stroke-width="0.9">
<circle cx="291.9" cy="182.2" r="1.7"/>
<circle cx="386.1" cy="174.4" r="1.7"/>
<circle cx="370" cy="225.6" r="1.7"/>
<circle cx="393.1" cy="245.3" r="1.7"/>
<circle cx="261.5" cy="258.8" r="1.7"/>
<circle cx="346.7" cy="287.9" r="1.7"/>
<circle cx="429" cy="328.6" r="1.7"/>
<circle cx="554.9" cy="155.2" r="1.7"/>
<circle cx="460.9" cy="181.4" r="1.7"/>
<circle cx="457" cy="206" r="1.7"/>
<circle cx="498.5" cy="205.6" r="1.7"/>
<circle cx="525" cy="243.7" r="1.7"/>
<circle cx="457" cy="275.4" r="1.7"/>
<circle cx="534.9" cy="302.1" r="1.7"/>
<circle cx="619.8" cy="173.9" r="1.7"/>
<circle cx="589.9" cy="231" r="1.7"/>
<circle cx="631.5" cy="317.5" r="1.7"/>
<circle cx="694" cy="253.3" r="1.7"/>
<circle cx="813.4" cy="183.5" r="1.7"/>
<circle cx="762.8" cy="230.7" r="1.7"/>
<circle cx="745.2" cy="289.7" r="1.7"/>
<circle cx="438.8" cy="361.9" r="1.7"/>
<circle cx="354.5" cy="401.1" r="1.7"/>
<circle cx="438.8" cy="401.1" r="1.7"/>
<circle cx="249.8" cy="428.1" r="1.7"/>
<circle cx="327.2" cy="471.2" r="1.7"/>
<circle cx="401.2" cy="493.5" r="1.7"/>
<circle cx="442.7" cy="461.6" r="1.7"/>
<circle cx="542.2" cy="342.7" r="1.7"/>
<circle cx="612" cy="357" r="1.7"/>
<circle cx="636.9" cy="407.8" r="1.7"/>
<circle cx="544.7" cy="409.7" r="1.7"/>
<circle cx="615.4" cy="431.2" r="1.7"/>
<circle cx="689.3" cy="334.4" r="1.7"/>
<circle cx="800.5" cy="377.7" r="1.7"/>
<circle cx="331.6" cy="538.5" r="1.7"/>
<circle cx="278.4" cy="561.8" r="1.7"/>
<circle cx="334.2" cy="586.5" r="1.7"/>
<circle cx="386.6" cy="652.7" r="1.7"/>
<circle cx="230.9" cy="668.8" r="1.7"/>
<circle cx="302.3" cy="674.8" r="1.7"/>
<circle cx="435.5" cy="546.3" r="1.7"/>
<circle cx="499" cy="595.3" r="1.7"/>
<circle cx="457" cy="619.7" r="1.7"/>
<circle cx="552.5" cy="632.2" r="1.7"/>
<circle cx="621.1" cy="573" r="1.7"/>
<circle cx="662.1" cy="544.7" r="1.7"/>
<circle cx="625.2" cy="658.4" r="1.7"/>
<circle cx="692.7" cy="628.6" r="1.7"/>
<circle cx="886.1" cy="618.4" r="1.7"/>
<circle cx="770.1" cy="671.4" r="1.7"/>
<circle cx="723.9" cy="678.4" r="1.7"/>
<circle cx="874.4" cy="699.2" r="1.7"/>
<circle cx="470" cy="143.8" r="1.7"/>
<circle cx="341.5" cy="705.4" r="1.7"/>
<circle cx="698.4" cy="516.6" r="1.7"/>
<circle cx="622" cy="142" r="1.7"/>
</g>
<g font-family="Liberation Sans,Noto Sans CJK SC,sans-serif" font-size="11.2" fill="#3a3a3a" stroke="#f6f6f5" stroke-width="1.6" paint-order="stroke" stroke-linejoin="round">
<text x="416.2" y="297" text-anchor="middle">郑州</text>
<text x="627" y="502.4" text-anchor="middle">合肥</text>
<text x="462.7" y="573.1">武汉</text>
<text x="553.8" y="702.6">南昌</text>
<text x="803" y="611.8" text-anchor="middle">杭州</text>
</g>
<circle cx="415.5" cy="278.5" r="2.9" fill="#fff" stroke="#e45a5a" stroke-width="1.1"/><circle cx="415.5" cy="278.5" r="1.1" fill="#e45a5a"/>
<circle cx="627.6" cy="484.4" r="2.9" fill="#fff" stroke="#e45a5a" stroke-width="1.1"/><circle cx="627.6" cy="484.4" r="1.1" fill="#e45a5a"/>
<circle cx="457" cy="568.3" r="2.9" fill="#fff" stroke="#e45a5a" stroke-width="1.1"/><circle cx="457" cy="568.3" r="1.1" fill="#e45a5a"/>
<circle cx="547.1" cy="697.6" r="2.9" fill="#fff" stroke="#e45a5a" stroke-width="1.1"/><circle cx="547.1" cy="697.6" r="1.1" fill="#e45a5a"/>
<g font-family="Liberation Sans,Noto Sans CJK SC,sans-serif" fill="#5f9be8">
<text x="309.5" y="271.2" font-size="10">小浪底水库</text>
<text x="613.5" y="297.2" font-size="9.7">微山湖</text>
<text x="400.4" y="627.7" font-size="9.6">长江</text>
<text x="357" y="685.4" font-size="10">洞庭湖</text>
<text x="572.5" y="671.1" font-size="10">鄱阳湖</text>
<text x="695.8" y="386.6" font-size="10">洪泽湖</text>
</g>
<defs><linearGradient id="mg" x1="0" y1="0" x2="0" y2="1"><stop offset="0" stop-color="#4c9ef8"/><stop offset="0.45" stop-color="#3a93f2"/><stop offset="1" stop-color="#1a80e2"/></linearGradient><path id="mk" d="M0 0C-0.6 -3.6 -2.4 -7 -4.9 -10.6C-6.4 -12.7 -7.3 -14.6 -7.3 -17A7.3 7.3 0 0 1 7.3 -17C7.3 -14.6 6.4 -12.7 4.9 -10.6C2.4 -7 0.6 -3.6 0 0Z" fill="url(#mg)"/></defs>
<use href="#mk" x="585.2" y="279.1"/>
<use href="#mk" x="531.8" y="384.5"/>
<use href="#mk" x="526.6" y="438.2"/>
<use href="#mk" x="538" y="414.8"/>
<use href="#mk" x="549.7" y="413.6"/>
<use href="#mk" x="566" y="411"/>
<use href="#mk" x="579" y="413.6"/>
<use href="#mk" x="613.5" y="407.6"/>
<use href="#mk" x="626.3" y="433"/>
<use href="#mk" x="624.4" y="438.2"/>
<use href="#mk" x="695.8" y="487"/>
<use href="#mk" x="699.7" y="497.9"/>
<use href="#mk" x="453.5" y="568.3"/>
<use href="#mk" x="450.6" y="572.3"/>
<g fill="none" stroke="#2f9f68" stroke-width="1.5" stroke-linecap="round"><path d="M213.3 700.5A3.6 3.6 0 0 1 218.6 696.6A5.6 5.6 0 0 1 229.6 696.6A3.6 3.6 0 0 1 235 700.5"/><path d="M217.5 700.3Q224 704.5 230.6 700.3"/></g><circle cx="217.5" cy="700" r="1.6" fill="#2f9f68"/><circle cx="230.6" cy="700" r="1.6" fill="#2f9f68"/>
<text x="239.4" y="701.8" font-family="Liberation Sans,Noto Sans CJK SC,sans-serif" font-size="9" font-weight="700" fill="#3aa672">田间云</text>
<text x="278.2" y="702" font-family="Liberation Sans,Noto Sans CJK SC,sans-serif" font-size="9.3" fill="#484848">优质有机资源高效配置平台</text>
<text x="213" y="706.2" font-family="Liberation Sans,sans-serif" font-size="2.4" font-weight="700" letter-spacing="0.55" fill="#3aa672">TIANJIANYUN</text>
<rect x="908.6" y="645.6" width="24.2" height="47" rx="3" fill="#7f9cc9" opacity="0.45"/>
<rect x="909" y="645" width="23.3" height="46.5" rx="2.8" fill="#fff"/><path d="M909 667.8H932.3" stroke="#eee" stroke-width="1"/>
<path d="M916.4 657.4H923.6M920 653.8V661" stroke="#222" stroke-width="1.2"/><path d="M917.8 680.6H922" stroke="#222" stroke-width="1.3"/>
<rect x="713" y="381.6" width="218.6" height="220" rx="6.5" fill="#fff"/>
<rect x="900" y="410" width="34.3" height="184" fill="#fff"/>
<path d="M918.6 388.1L923.9 393.4M923.9 388.1L918.6 393.4" stroke="#b4b4b4" stroke-width="1.1"/>
<rect x="720.2" y="435" width="19.8" height="10.5" fill="#dedede"/>
<rect x="714" y="435" width="6.2" height="2.6" fill="#f8d9b4"/>
<rect x="740" y="438.3" width="19.4" height="9.7" fill="#8e8e8e"/>
<rect x="753" y="448" width="6.4" height="9.5" fill="#8e8e8e"/>
<rect x="759.4" y="438.3" width="19.5" height="19.2" fill="#fbfbfb"/>
<rect x="778.9" y="438.3" width="19.4" height="19.2" fill="#acacac"/>
<rect x="798.3" y="438.3" width="19.5" height="19.2" fill="#d2d2d2"/>
<rect x="817.8" y="438.3" width="19.4" height="19.2" fill="#b0b0b0"/>
<rect x="837.2" y="438.3" width="19.4" height="19.2" fill="#b9b9b9"/>
<rect x="751" y="477.2" width="8.4" height="19.2" fill="#5f5f5f"/>
<rect x="759.4" y="477.2" width="19.5" height="19.2" fill="#f1f1f1"/>
<rect x="778.9" y="477.2" width="19.4" height="19.2" fill="#c2c2c2"/>
<rect x="751" y="496.4" width="8.4" height="19.5" fill="#999"/>
<rect x="759.4" y="496.4" width="19.5" height="19.5" fill="#f0f0f0"/>
<rect x="798.3" y="496.4" width="19.5" height="19.5" fill="#f2f2f2"/>
<rect x="751" y="515.9" width="8.4" height="19.4" fill="#eef0ee"/>
<rect x="741.4" y="535.3" width="18" height="14.7" fill="#a9a9a9"/>
<rect x="756.4" y="550" width="3" height="22" fill="#9a9a9a"/>
<rect x="778.9" y="555" width="38.9" height="18.8" fill="#bcbcbc"/>
<rect x="817.8" y="555" width="19.4" height="18.8" fill="#f6f6f6"/>
<rect x="749" y="579" width="10.4" height="14.8" fill="#bbb"/>
<rect x="759.4" y="573.8" width="19.5" height="20" fill="#fafafa"/>
<rect x="837.2" y="573.8" width="38.9" height="20" fill="#f1f1f1"/>
<rect x="755.6" y="593.8" width="120.5" height="7.8" fill="#f8f8f8"/>
<rect x="876.1" y="593.8" width="19.4" height="7.8" fill="#f9cf9b"/>
<rect x="895.5" y="593.8" width="19.5" height="7.8" fill="#f6f6f6"/>
<rect x="915" y="593.8" width="19.3" height="7.8" fill="#b5cffa"/>
<rect x="934.3" y="593.8" width="7.7" height="7.8" fill="#bbd5fb"/>
<g font-family="Liberation Sans,Noto Sans CJK SC,sans-serif" font-size="11" font-weight="700" fill="#333">
<text x="720" y="414.7">名称:</text>
<text x="720" y="429.2">地址:</text>
<text x="720" y="458.6">设备ID</text>
<text x="720" y="474.1">经纬度:</text>
<text x="720" y="488.6">风速:</text>
<text x="720" y="503.5">温度:</text>
<text x="720" y="517.3">湿度:</text>
<text x="720" y="532.8">PH值:</text>
<text x="720" y="548.4">氮:</text>
<text x="720" y="563.2">速效磷:</text>
<text x="720" y="577.7">速效钾:</text>
<text x="720" y="592.2">时间:</text>
</g>
<!--/MAP-->
</svg>
</div>
</body>
</html>
